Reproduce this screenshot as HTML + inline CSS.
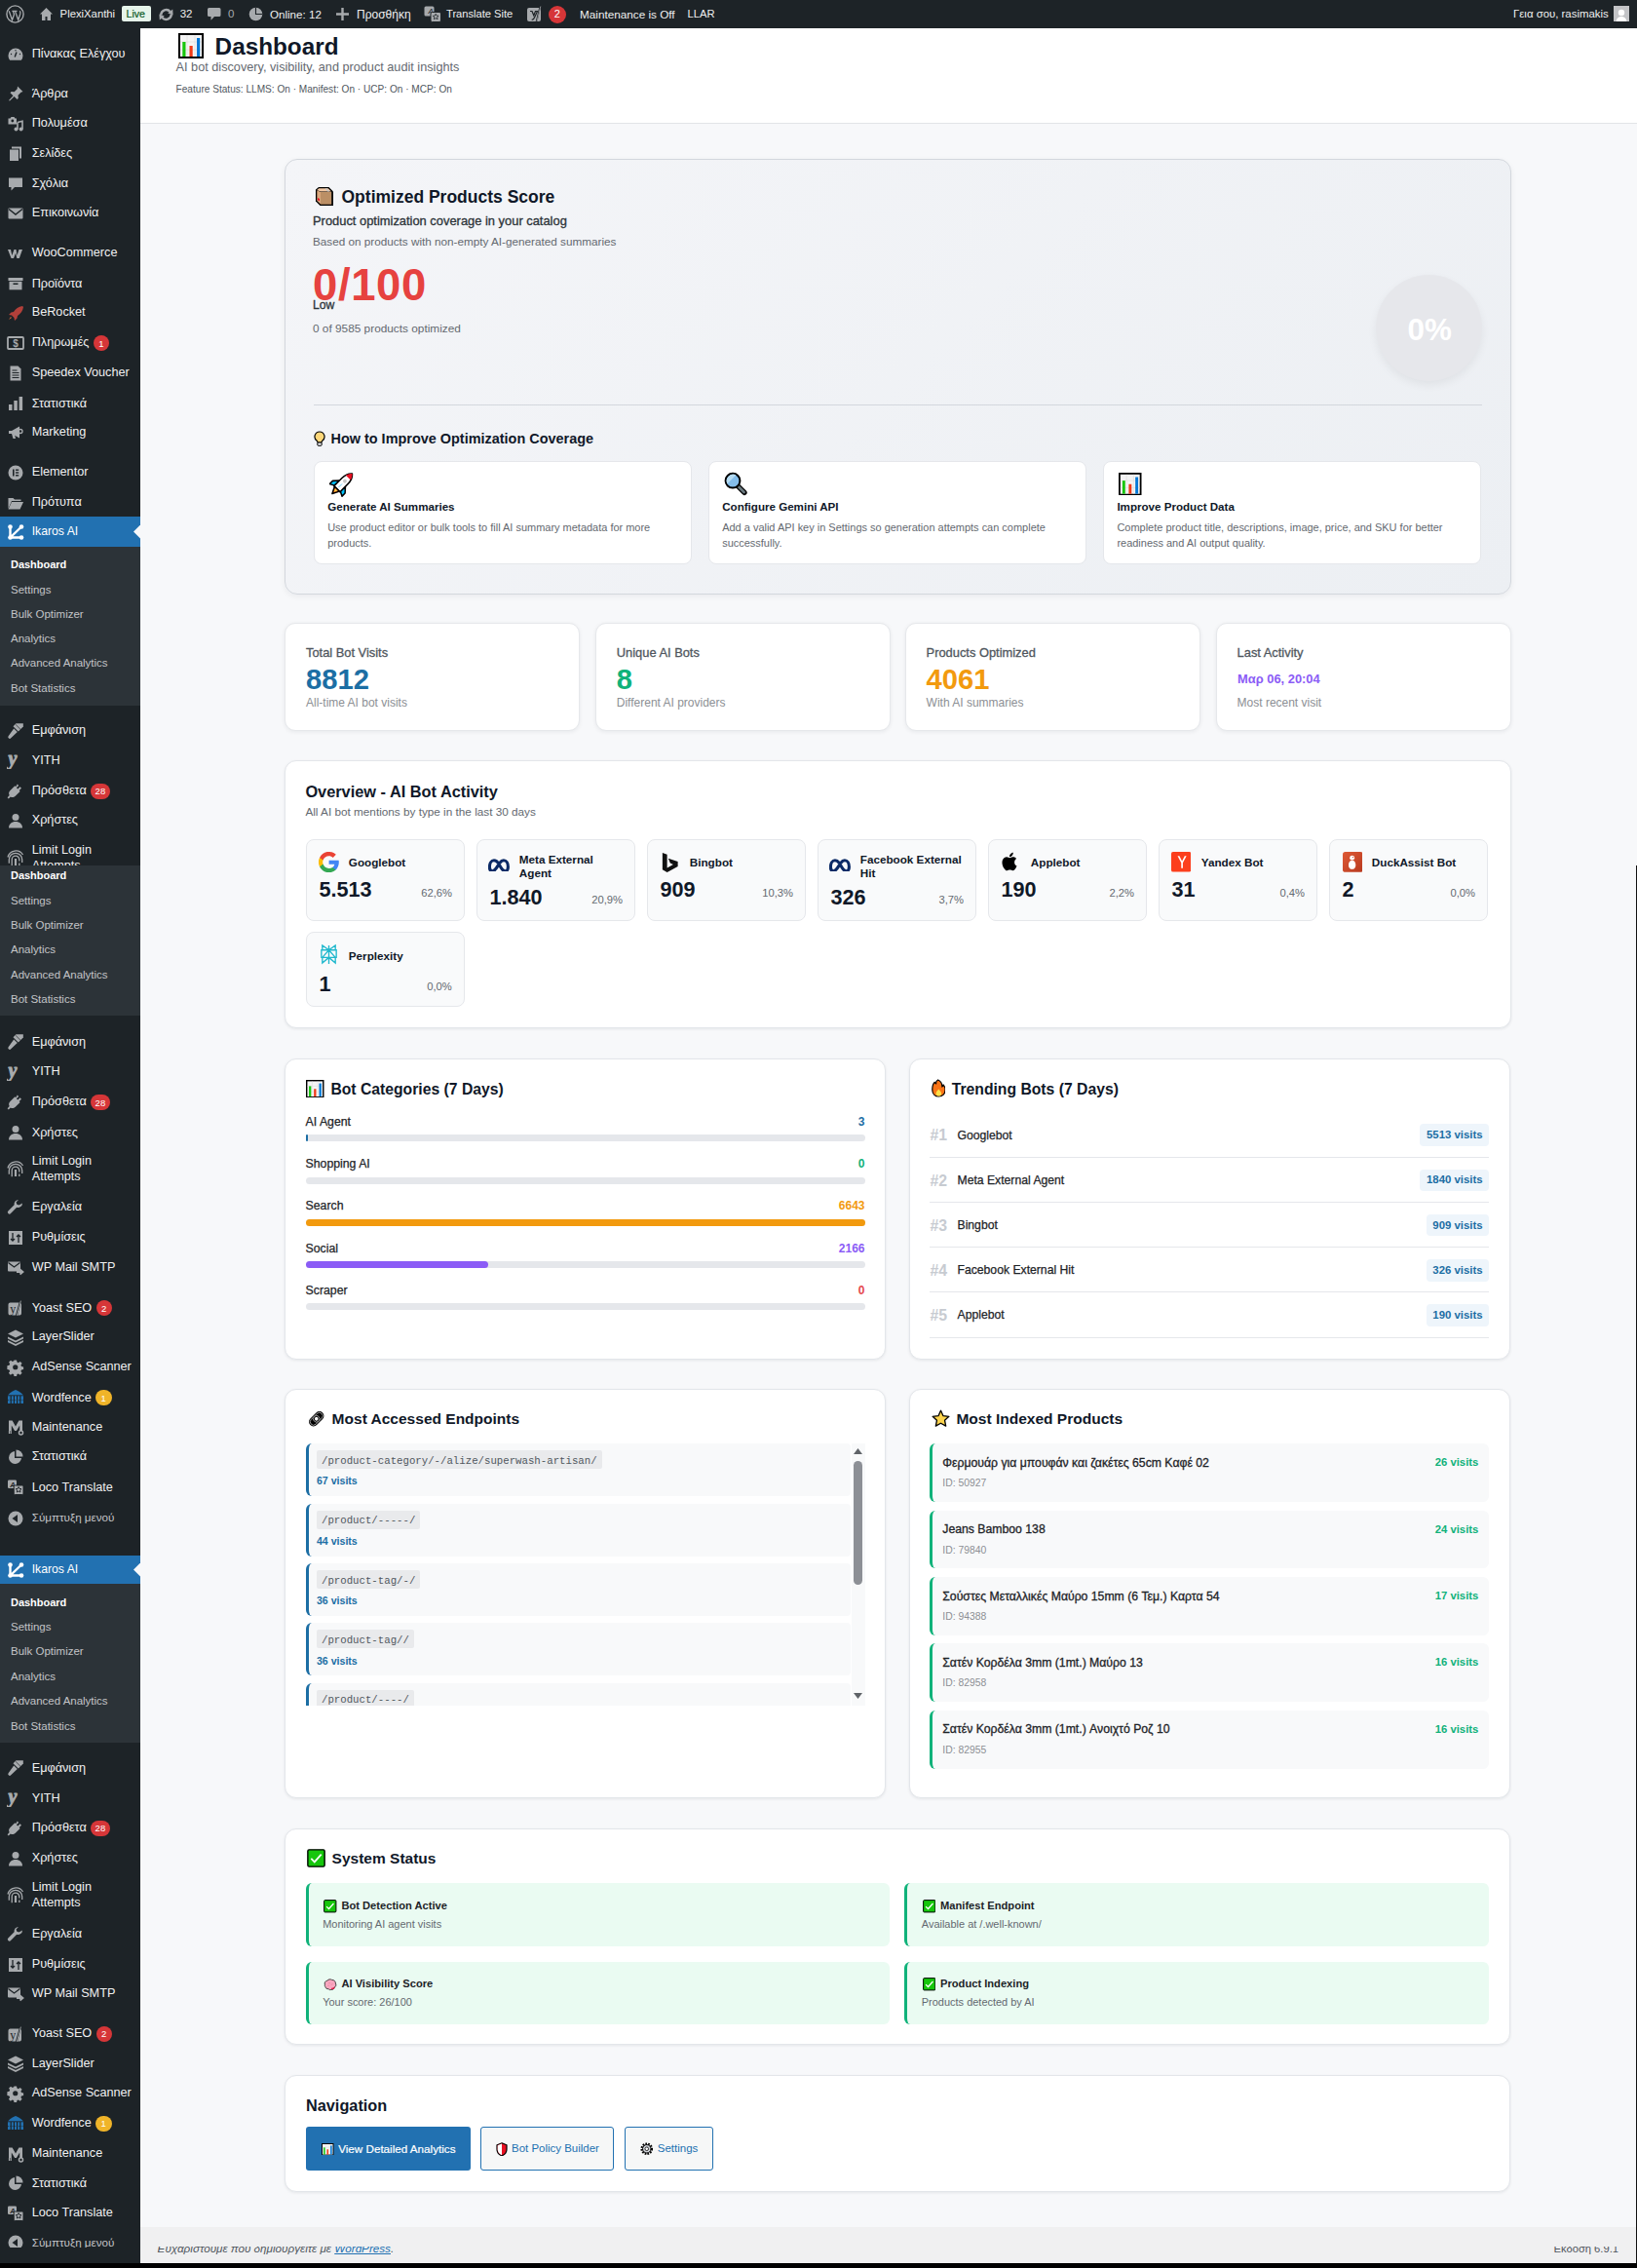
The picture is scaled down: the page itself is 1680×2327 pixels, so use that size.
<!DOCTYPE html>
<html><head><meta charset="utf-8"><title>Dashboard</title>
<style>
*{margin:0;padding:0;box-sizing:border-box}
html,body{width:1680px;height:2327px;overflow:hidden}
body{position:relative;background:#f7f8fa;font-family:"Liberation Sans",sans-serif;color:#1d2327}
.r{position:absolute;display:block}
.t{position:absolute;white-space:nowrap}
</style></head><body>
<div class="r" style="left:144.0px;top:29.0px;width:1536.0px;height:97.3px;background:#fff"></div>
<div class="r" style="left:144.0px;top:126.3px;width:1536.0px;height:1.0px;background:#e2e4e7"></div>
<div class="r" style="left:144.0px;top:2285.3px;width:1536.0px;height:36.7px;background:#f0f0f1"></div>
<div class="r" style="left:0.0px;top:2322.0px;width:1680.0px;height:5.0px;background:#000"></div>
<div class="r" style="left:1679.0px;top:888.0px;width:1.0px;height:1434.0px;background:#111"></div>
<div class="r" style="left:0.0px;top:29.0px;width:144.0px;height:2293.0px;background:#1d2327"></div>
<div class="r" style="left:0.0px;top:0.0px;width:1680.0px;height:29.0px;background:#1d2327"></div>
<svg class="r" style="left:6.0px;top:5.0px" width="19.0" height="19.0" viewBox="0 0 19 19"><circle cx="9.5" cy="9.5" r="8.6" fill="none" stroke="#a7aaad" stroke-width="1.4"/><path d="M3.2 6.2l3.3 9.3 2-5.8-1.1-3.3h-1M7.3 6.4h4.2M9.5 6.4l3.2 9.1 2-6c.4-1.3.3-2.4-.4-3.2" fill="none" stroke="#a7aaad" stroke-width="1.3"/></svg>
<svg class="r" style="left:40.0px;top:6.5px" width="15.0" height="15.0" viewBox="0 0 15 15"><path d="M7.5 1L1 7.5h2V14h3.5V10h2v4H12V7.5h2z" fill="#a7aaad"/></svg>
<div class="t" style="left:61.6px;top:8.9px;font-size:11.3px;line-height:11.3px;font-weight:400;color:#f0f0f1;">PlexiXanthi</div>
<div class="r" style="left:124.7px;top:6.2px;width:30.5px;height:15.5px;background:#e6f4ea;border-radius:2px"></div>
<div class="t" style="left:129.5px;top:9.2px;font-size:10.6px;line-height:10.6px;font-weight:400;color:#0b5a1e;-webkit-text-stroke:0.2px #0b5a1e;">Live</div>
<svg class="r" style="left:161.5px;top:6.5px" width="17.0" height="16.0" viewBox="0 0 17 16"><path d="M3.2 8.2A5.3 5.3 0 0 1 12.6 5" fill="none" stroke="#a7aaad" stroke-width="2.4"/><path d="M10.2 6.6L15.6 8.4 15.2 2.6z" fill="#a7aaad"/><path d="M13.8 7.8A5.3 5.3 0 0 1 4.4 11" fill="none" stroke="#a7aaad" stroke-width="2.4"/><path d="M6.8 9.4L1.4 7.6 1.8 13.4z" fill="#a7aaad"/></svg>
<div class="t" style="left:184.7px;top:8.8px;font-size:11.5px;line-height:11.5px;font-weight:400;color:#f0f0f1;">32</div>
<svg class="r" style="left:212.0px;top:7.0px" width="15.0" height="15.0" viewBox="0 0 15 15"><path d="M2.5 1h10.5a1.5 1.5 0 0 1 1.5 1.5v6a1.5 1.5 0 0 1-1.5 1.5H8l-3.5 3.8V10H2.5A1.5 1.5 0 0 1 1 8.5v-6A1.5 1.5 0 0 1 2.5 1z" fill="#a7aaad"/></svg>
<div class="t" style="left:234.0px;top:8.8px;font-size:11.5px;line-height:11.5px;font-weight:400;color:#a7aaad;">0</div>
<svg class="r" style="left:255.0px;top:7.0px" width="15.0" height="15.0" viewBox="0 0 15 15"><circle cx="7.5" cy="7.5" r="6.8" fill="#a7aaad"/><path d="M7.5 .7v6.8h6.8" fill="none" stroke="#1d2327" stroke-width="1.1"/></svg>
<div class="t" style="left:277.0px;top:8.7px;font-size:11.6px;line-height:11.6px;font-weight:400;color:#f0f0f1;">Online: 12</div>
<svg class="r" style="left:345.0px;top:8.0px" width="13.0" height="13.0" viewBox="0 0 13 13"><path d="M5.3 0h2.4v5.3H13v2.4H7.7V13H5.3V7.7H0V5.3h5.3z" fill="#a7aaad"/></svg>
<div class="t" style="left:366.0px;top:8.5px;font-size:12.0px;line-height:12.0px;font-weight:400;color:#f0f0f1;">Προσθήκη</div>
<svg class="r" style="left:435.0px;top:6.0px" width="18.0" height="17.0" viewBox="0 0 18 17"><rect x="0.5" y="0.5" width="10" height="10" rx="1.5" fill="#a7aaad"/><text x="4.5" y="8" font-size="8" font-style="italic" font-family="Liberation Sans" fill="#1d2327">A</text><rect x="7" y="6.5" width="10.5" height="10" rx="1.5" fill="#a7aaad" stroke="#1d2327" stroke-width="1"/><path d="M12.2 8.3l.9 1.8 2 .3-1.5 1.3.4 2-1.8-1-1.8 1 .4-2-1.5-1.3 2-.3z" fill="none" stroke="#1d2327" stroke-width="0.8"/></svg>
<div class="t" style="left:458.0px;top:9.0px;font-size:11.15px;line-height:11.15px;font-weight:400;color:#f0f0f1;">Translate Site</div>
<svg class="r" style="left:540.0px;top:5.0px" width="17.0" height="18.0" viewBox="0 0 17 18"><path d="M3 3h10a2 2 0 0 1 2 2v10a2 2 0 0 1-2 2H3a2 2 0 0 1-2-2V5a2 2 0 0 1 2-2z" fill="#a7aaad"/><path d="M4 6.5h2l1.8 4.3 1.7-4.3h2L8.5 13c-.6 1.5-1.4 2.2-2.8 2.4" fill="none" stroke="#1d2327" stroke-width="1.2"/><path d="M10.5 17.5L14.5 1" stroke="#1d2327" stroke-width="1.6"/><path d="M11 17L14.8 1.5" stroke="#a7aaad" stroke-width="0.8"/></svg>
<div class="r" style="left:563.0px;top:5.5px;width:18.0px;height:18.0px;background:#d63638;border-radius:50%"></div>
<div class="t" style="left:568.8px;top:9.2px;font-size:11px;line-height:11px;font-weight:400;color:#fff;">2</div>
<div class="t" style="left:595.0px;top:8.7px;font-size:11.74px;line-height:11.74px;font-weight:400;color:#f0f0f1;">Maintenance is Off</div>
<div class="t" style="left:705.5px;top:8.9px;font-size:11.2px;line-height:11.2px;font-weight:400;color:#f0f0f1;">LLAR</div>
<div class="t" style="left:1553.0px;top:8.8px;font-size:11.4px;line-height:11.4px;font-weight:400;color:#f0f0f1;">Γεια σου, rasimakis</div>
<div class="r" style="left:1655.8px;top:6.0px;width:16.2px;height:16.0px;background:#c3c4c7"></div>
<svg class="r" style="left:1656.0px;top:6.5px" width="16.0" height="15.5" viewBox="0 0 16 15.5"><circle cx="8" cy="6" r="3.2" fill="#fff"/><path d="M2.5 15.5c.3-3.5 2.6-5.5 5.5-5.5s5.2 2 5.5 5.5z" fill="#fff"/></svg>
<svg class="r" style="left:183.0px;top:34.0px" width="26.0" height="26.0" viewBox="0 0 26 26"><g transform="scale(1.0)"><rect x="1" y="1" width="24" height="24" fill="#f4f4f4" stroke="#000" stroke-width="2"/><path d="M9 2v22M17 2v22M2 9h22M2 17h22" stroke="#ddd" stroke-width="0.7"/><rect x="4.3" y="9" width="3.2" height="15" fill="#16c60c"/><rect x="11.5" y="13" width="3.2" height="11" fill="#f03a17"/><rect x="19" y="5" width="3.2" height="19" fill="#0078d7"/></g></svg>
<div class="t" style="left:220.6px;top:35.8px;font-size:24.3px;line-height:24.3px;font-weight:700;color:#101828;">Dashboard</div>
<div class="t" style="left:180.6px;top:62.8px;font-size:12.7px;line-height:12.7px;font-weight:400;color:#646970;">AI bot discovery, visibility, and product audit insights</div>
<div class="t" style="left:180.6px;top:86.9px;font-size:10.1px;line-height:10.1px;font-weight:400;color:#50575e;">Feature Status: LLMS: On · Manifest: On · UCP: On · MCP: On</div>
<div class="r" style="left:144px;top:2305.2px;width:1536px;height:16.8px;overflow:hidden">
<div style="position:absolute;left:0;top:-2305.2px;width:1536px;height:2327px">
<div class="t" style="left:17.6px;top:2301.3px;font-size:11.68px;line-height:11.68px;font-weight:400;color:#50575e;font-style:italic;">Ευχαριστούμε που δημιουργείτε με <span style="color:#2271b1;text-decoration:underline">WordPress</span>.</div>
<div class="t" style="right:19.0px;top:2301.5px;font-size:11.2px;line-height:11.2px;font-weight:400;color:#50575e;">Έκδοση 6.9.1</div>
</div></div>
<div class="t" style="left:32.7px;top:49.3px;font-size:12.68px;line-height:12.68px;font-weight:400;color:#f0f0f1;">Πίνακας Ελέγχου</div>
<svg class="r" style="left:7.0px;top:47.0px" width="18.0" height="18.0" viewBox="0 0 18 18"><path d="M9 2.5a7.5 7.5 0 0 0-7.5 7.5c0 1.8.6 3.4 1.7 4.7h11.6a7.4 7.4 0 0 0 1.7-4.7A7.5 7.5 0 0 0 9 2.5z" fill="#a7aaad"/><path d="M8.2 11.5l1.8-5" stroke="#1d2327" stroke-width="1.4"/><circle cx="4.5" cy="8.5" r=".7" fill="#1d2327"/><circle cx="13.5" cy="8.5" r=".7" fill="#1d2327"/><circle cx="9" cy="4.8" r=".7" fill="#1d2327"/></svg>
<div class="t" style="left:32.7px;top:89.6px;font-size:12.68px;line-height:12.68px;font-weight:400;color:#f0f0f1;">Άρθρα</div>
<svg class="r" style="left:7.0px;top:87.3px" width="18.0" height="18.0" viewBox="0 0 18 18"><path d="M11 1.5l5.5 5.5-2 .8-3 3 .3 3-1.2 1.2-3-3L3 16.5 2 16l4.5-4.7-3-3L4.7 7l3 .3 3-3z" fill="#a7aaad"/></svg>
<div class="t" style="left:32.7px;top:120.4px;font-size:12.68px;line-height:12.68px;font-weight:400;color:#f0f0f1;">Πολυμέσα</div>
<svg class="r" style="left:7.0px;top:118.1px" width="18.0" height="18.0" viewBox="0 0 18 18"><path d="M1.5 3.5h2l1-1.5h3l1 1.5h1.5v6h-8.5z" fill="#a7aaad"/><circle cx="5.8" cy="6" r="1.4" fill="#1d2327"/><path d="M11 7.5l5-1.3v8.3" fill="none" stroke="#a7aaad" stroke-width="1.6"/><path d="M11 7.5v7" stroke="#a7aaad" stroke-width="1.6"/><circle cx="9.5" cy="14.5" r="2" fill="#a7aaad"/><circle cx="14.6" cy="14.5" r="2" fill="#a7aaad"/></svg>
<div class="t" style="left:32.7px;top:151.1px;font-size:12.68px;line-height:12.68px;font-weight:400;color:#f0f0f1;">Σελίδες</div>
<svg class="r" style="left:7.0px;top:148.8px" width="18.0" height="18.0" viewBox="0 0 18 18"><rect x="5" y="1.5" width="10" height="12" fill="#a7aaad"/><rect x="2.5" y="4" width="10" height="12.5" fill="#a7aaad" stroke="#1d2327" stroke-width="1"/></svg>
<div class="t" style="left:32.7px;top:182.3px;font-size:12.68px;line-height:12.68px;font-weight:400;color:#f0f0f1;">Σχόλια</div>
<svg class="r" style="left:7.0px;top:180.0px" width="18.0" height="18.0" viewBox="0 0 18 18"><path d="M2 2.5h14v9.5H8l-3.5 3.5V12H2z" fill="#a7aaad"/></svg>
<div class="t" style="left:32.7px;top:212.1px;font-size:12.68px;line-height:12.68px;font-weight:400;color:#f0f0f1;">Επικοινωνία</div>
<svg class="r" style="left:7.0px;top:209.8px" width="18.0" height="18.0" viewBox="0 0 18 18"><rect x="1.5" y="3.5" width="15" height="11" rx="1" fill="#a7aaad"/><path d="M2 4.5l7 5.5 7-5.5" fill="none" stroke="#1d2327" stroke-width="1.5"/></svg>
<div class="t" style="left:32.7px;top:253.1px;font-size:12.68px;line-height:12.68px;font-weight:400;color:#f0f0f1;">WooCommerce</div>
<svg class="r" style="left:7.0px;top:250.8px" width="18.0" height="18.0" viewBox="0 0 18 18"><path d="M1 5h3l1.3 6 2.2-6h2l1 6 2-6H16l-3.2 9h-2.5l-1.2-5.2L7 14H4.5z" fill="#a7aaad"/></svg>
<div class="t" style="left:32.7px;top:284.5px;font-size:12.68px;line-height:12.68px;font-weight:400;color:#f0f0f1;">Προϊόντα</div>
<svg class="r" style="left:7.0px;top:282.2px" width="18.0" height="18.0" viewBox="0 0 18 18"><rect x="1.5" y="3" width="15" height="3" fill="#a7aaad"/><rect x="2.5" y="6.8" width="13" height="8.5" fill="#a7aaad"/><rect x="6.5" y="8.5" width="5" height="1.5" fill="#1d2327"/></svg>
<div class="t" style="left:32.7px;top:314.2px;font-size:12.68px;line-height:12.68px;font-weight:400;color:#f0f0f1;">BeRocket</div>
<svg class="r" style="left:7.0px;top:311.9px" width="18.0" height="18.0" viewBox="0 0 18 18"><path d="M16 2c-4 .5-7 3-9 6l-2.5.5L2 11l3 .5L7.5 14l.5 3 2.5-2.5.5-2.5c3-2 5.5-5 6-9z" fill="#b3403a"/><path d="M4 13l-2 3 3-2z" fill="#d2693a"/></svg>
<div class="t" style="left:32.7px;top:345.4px;font-size:12.68px;line-height:12.68px;font-weight:400;color:#f0f0f1;">Πληρωμές</div>
<svg class="r" style="left:7.0px;top:343.1px" width="18.0" height="18.0" viewBox="0 0 18 18"><rect x="1" y="3" width="16" height="12" rx="1" fill="none" stroke="#a7aaad" stroke-width="1.8"/><text x="9" y="13" font-size="10" font-weight="700" text-anchor="middle" fill="#a7aaad" font-family="Liberation Sans">$</text></svg>
<div class="r" style="left:95.9px;top:344.1px;width:16.5px;height:16.0px;background:#d63638;border-radius:8px"></div>
<div class="t" style="left:101.2px;top:347.5px;font-size:9.5px;line-height:9.5px;font-weight:400;color:#fff;">1</div>
<div class="t" style="left:32.7px;top:375.8px;font-size:12.68px;line-height:12.68px;font-weight:400;color:#f0f0f1;">Speedex Voucher</div>
<svg class="r" style="left:7.0px;top:373.5px" width="18.0" height="18.0" viewBox="0 0 18 18"><path d="M3.5 1.5h8l3 3v12h-11z" fill="#a7aaad"/><path d="M5.5 6h5M5.5 8.5h7M5.5 11h7M5.5 13.5h7" stroke="#1d2327" stroke-width="1"/></svg>
<div class="t" style="left:32.7px;top:407.5px;font-size:12.68px;line-height:12.68px;font-weight:400;color:#f0f0f1;">Στατιστικά</div>
<svg class="r" style="left:7.0px;top:405.2px" width="18.0" height="18.0" viewBox="0 0 18 18"><rect x="2" y="10" width="3.5" height="6" fill="#a7aaad"/><rect x="7.3" y="6" width="3.5" height="10" fill="#a7aaad"/><rect x="12.6" y="2" width="3.5" height="14" fill="#a7aaad"/></svg>
<div class="t" style="left:32.7px;top:437.3px;font-size:12.68px;line-height:12.68px;font-weight:400;color:#f0f0f1;">Marketing</div>
<svg class="r" style="left:7.0px;top:435.0px" width="18.0" height="18.0" viewBox="0 0 18 18"><path d="M2 7h3l8-4.5v12L5 10H2z" fill="#a7aaad"/><path d="M5 10l1.5 5h2.5L8 10.5" fill="#a7aaad"/><circle cx="14" cy="7.5" r="2" fill="none" stroke="#a7aaad" stroke-width="1.3"/></svg>
<div class="t" style="left:32.7px;top:478.3px;font-size:12.68px;line-height:12.68px;font-weight:400;color:#f0f0f1;">Elementor</div>
<svg class="r" style="left:7.0px;top:476.0px" width="18.0" height="18.0" viewBox="0 0 18 18"><circle cx="9" cy="9" r="7.5" fill="#a7aaad"/><rect x="6" y="5.5" width="1.6" height="7" fill="#1d2327"/><rect x="9" y="5.5" width="3.2" height="1.4" fill="#1d2327"/><rect x="9" y="8.3" width="3.2" height="1.4" fill="#1d2327"/><rect x="9" y="11.1" width="3.2" height="1.4" fill="#1d2327"/></svg>
<div class="t" style="left:32.7px;top:509.4px;font-size:12.68px;line-height:12.68px;font-weight:400;color:#f0f0f1;">Πρότυπα</div>
<svg class="r" style="left:7.0px;top:507.1px" width="18.0" height="18.0" viewBox="0 0 18 18"><path d="M1.5 4h5l1.5 1.5h6.5V7H5l-3.5 8z" fill="#a7aaad"/><path d="M5 8h12l-3.5 7.5H1.5z" fill="#a7aaad"/></svg>
<div class="r" style="left:0.0px;top:530.0px;width:144.0px;height:30.7px;background:#2271b1"></div>
<div class="t" style="left:32.7px;top:539.4px;font-size:12.23px;line-height:12.23px;font-weight:400;color:#fff;">Ikaros AI</div>
<svg class="r" style="left:7.0px;top:536.9px" width="18.0" height="18.0" viewBox="0 0 18 18"><circle cx="3.5" cy="3.5" r="2.3" fill="#fff"/><circle cx="15" cy="3.5" r="2.3" fill="#fff"/><circle cx="3.5" cy="14.5" r="2.3" fill="#fff"/><circle cx="15" cy="14.5" r="2.3" fill="#fff"/><path d="M3.5 3.5v11h11.5M3.5 14.5L15 3.5" stroke="#fff" stroke-width="2.4" fill="none"/></svg>
<svg class="r" style="left:136.5px;top:537.9px" width="7.5" height="15.0" viewBox="0 0 7.5 15"><path d="M7.5 0v15L0 7.5z" fill="#f7f8fa"/></svg>
<div class="r" style="left:0.0px;top:560.7px;width:144.0px;height:162.9px;background:#2c3338"></div>
<div class="t" style="left:11.0px;top:574.4px;font-size:10.98px;line-height:10.98px;font-weight:700;color:#fff;">Dashboard</div>
<div class="t" style="left:11.0px;top:599.5px;font-size:11.49px;line-height:11.49px;font-weight:400;color:#c3c4c7;">Settings</div>
<div class="t" style="left:11.0px;top:624.8px;font-size:11.49px;line-height:11.49px;font-weight:400;color:#c3c4c7;">Bulk Optimizer</div>
<div class="t" style="left:11.0px;top:650.1px;font-size:11.49px;line-height:11.49px;font-weight:400;color:#c3c4c7;">Analytics</div>
<div class="t" style="left:11.0px;top:675.4px;font-size:11.49px;line-height:11.49px;font-weight:400;color:#c3c4c7;">Advanced Analytics</div>
<div class="t" style="left:11.0px;top:700.7px;font-size:11.49px;line-height:11.49px;font-weight:400;color:#c3c4c7;">Bot Statistics</div>
<div class="t" style="left:32.7px;top:743.3px;font-size:12.68px;line-height:12.68px;font-weight:400;color:#f0f0f1;">Εμφάνιση</div>
<svg class="r" style="left:7.0px;top:741.0px" width="18.0" height="18.0" viewBox="0 0 18 18"><path d="M9.5 1.2h7.3v3.3l-5 5-5.3-5.3z" fill="#a7aaad"/><path d="M9.2 2.5l5.8 5.8" stroke="#1d2327" stroke-width="0.7"/><path d="M7.2 6.5l3.6 3.6-6.6 6.2a1.6 1.6 0 0 1-2.4-2.4z" fill="#a7aaad"/></svg>
<div class="t" style="left:32.7px;top:773.6px;font-size:12.68px;line-height:12.68px;font-weight:400;color:#f0f0f1;">YITH</div>
<svg class="r" style="left:7.0px;top:771.3px" width="18.0" height="18.0" viewBox="0 0 18 18"><text x="1.5" y="14" font-size="20" font-weight="700" font-style="italic" font-family="Liberation Serif" fill="#a7aaad" stroke="#a7aaad" stroke-width="1">y</text></svg>
<div class="t" style="left:32.7px;top:805.3px;font-size:12.68px;line-height:12.68px;font-weight:400;color:#f0f0f1;">Πρόσθετα</div>
<svg class="r" style="left:7.0px;top:803.0px" width="18.0" height="18.0" viewBox="0 0 18 18"><path d="M10.8 1.5l1.4 1.4-2.3 2.3 1.4 1.4 2.3-2.3 1.4 1.4-2.3 2.3.9.9-4.8 4.8c-1.6 1.6-3.6 1.8-5 .8L1.8 16.4.6 15.2l2.1-2.1c-1-1.4-.8-3.4.8-5l4.8-4.8.9.9z" fill="#a7aaad"/></svg>
<div class="r" style="left:93.3px;top:804.0px;width:20.0px;height:16.0px;background:#d63638;border-radius:8px"></div>
<div class="t" style="left:97.6px;top:807.4px;font-size:9.5px;line-height:9.5px;font-weight:400;color:#fff;">28</div>
<div class="t" style="left:32.7px;top:835.0px;font-size:12.68px;line-height:12.68px;font-weight:400;color:#f0f0f1;">Χρήστες</div>
<svg class="r" style="left:7.0px;top:832.7px" width="18.0" height="18.0" viewBox="0 0 18 18"><circle cx="9" cy="5.5" r="3.5" fill="#a7aaad"/><path d="M2 16.5c0-4 3-6.5 7-6.5s7 2.5 7 6.5z" fill="#a7aaad"/></svg>
<div class="t" style="left:32.7px;top:865.7px;font-size:12.68px;line-height:12.68px;font-weight:400;color:#f0f0f1;">Limit Login</div>
<div class="t" style="left:32.7px;top:882.2px;font-size:12.68px;line-height:12.68px;font-weight:400;color:#f0f0f1;">Attempts</div>
<svg class="r" style="left:7.0px;top:871.6px" width="18.0" height="18.0" viewBox="0 0 18 18"><path d="M5.2 16.2V10a3.8 3.8 0 0 1 7.6 0v1.5M2.3 13.8V10a6.7 6.7 0 0 1 13.4 0v3M1 7.5A8.5 8.5 0 0 1 16.5 5" fill="none" stroke="#a7aaad" stroke-width="1.3"/><path d="M9 9v7" stroke="#a7aaad" stroke-width="2.2"/><path d="M12.8 13.5v2.5" stroke="#a7aaad" stroke-width="1.3"/></svg>
<div class="r" style="left:0.0px;top:887.7px;width:144.0px;height:154.6px;background:#2c3338"></div>
<div class="t" style="left:11.0px;top:893.4px;font-size:10.98px;line-height:10.98px;font-weight:700;color:#fff;">Dashboard</div>
<div class="t" style="left:11.0px;top:918.6px;font-size:11.49px;line-height:11.49px;font-weight:400;color:#c3c4c7;">Settings</div>
<div class="t" style="left:11.0px;top:944.0px;font-size:11.49px;line-height:11.49px;font-weight:400;color:#c3c4c7;">Bulk Optimizer</div>
<div class="t" style="left:11.0px;top:969.4px;font-size:11.49px;line-height:11.49px;font-weight:400;color:#c3c4c7;">Analytics</div>
<div class="t" style="left:11.0px;top:994.9px;font-size:11.49px;line-height:11.49px;font-weight:400;color:#c3c4c7;">Advanced Analytics</div>
<div class="t" style="left:11.0px;top:1020.3px;font-size:11.49px;line-height:11.49px;font-weight:400;color:#c3c4c7;">Bot Statistics</div>
<div class="t" style="left:32.7px;top:1062.7px;font-size:12.68px;line-height:12.68px;font-weight:400;color:#f0f0f1;">Εμφάνιση</div>
<svg class="r" style="left:7.0px;top:1060.4px" width="18.0" height="18.0" viewBox="0 0 18 18"><path d="M9.5 1.2h7.3v3.3l-5 5-5.3-5.3z" fill="#a7aaad"/><path d="M9.2 2.5l5.8 5.8" stroke="#1d2327" stroke-width="0.7"/><path d="M7.2 6.5l3.6 3.6-6.6 6.2a1.6 1.6 0 0 1-2.4-2.4z" fill="#a7aaad"/></svg>
<div class="t" style="left:32.7px;top:1093.4px;font-size:12.68px;line-height:12.68px;font-weight:400;color:#f0f0f1;">YITH</div>
<svg class="r" style="left:7.0px;top:1091.1px" width="18.0" height="18.0" viewBox="0 0 18 18"><text x="1.5" y="14" font-size="20" font-weight="700" font-style="italic" font-family="Liberation Serif" fill="#a7aaad" stroke="#a7aaad" stroke-width="1">y</text></svg>
<div class="t" style="left:32.7px;top:1124.4px;font-size:12.68px;line-height:12.68px;font-weight:400;color:#f0f0f1;">Πρόσθετα</div>
<svg class="r" style="left:7.0px;top:1122.1px" width="18.0" height="18.0" viewBox="0 0 18 18"><path d="M10.8 1.5l1.4 1.4-2.3 2.3 1.4 1.4 2.3-2.3 1.4 1.4-2.3 2.3.9.9-4.8 4.8c-1.6 1.6-3.6 1.8-5 .8L1.8 16.4.6 15.2l2.1-2.1c-1-1.4-.8-3.4.8-5l4.8-4.8.9.9z" fill="#a7aaad"/></svg>
<div class="r" style="left:93.3px;top:1123.1px;width:20.0px;height:16.0px;background:#d63638;border-radius:8px"></div>
<div class="t" style="left:97.6px;top:1126.5px;font-size:9.5px;line-height:9.5px;font-weight:400;color:#fff;">28</div>
<div class="t" style="left:32.7px;top:1155.5px;font-size:12.68px;line-height:12.68px;font-weight:400;color:#f0f0f1;">Χρήστες</div>
<svg class="r" style="left:7.0px;top:1153.2px" width="18.0" height="18.0" viewBox="0 0 18 18"><circle cx="9" cy="5.5" r="3.5" fill="#a7aaad"/><path d="M2 16.5c0-4 3-6.5 7-6.5s7 2.5 7 6.5z" fill="#a7aaad"/></svg>
<div class="t" style="left:32.7px;top:1184.5px;font-size:12.68px;line-height:12.68px;font-weight:400;color:#f0f0f1;">Limit Login</div>
<div class="t" style="left:32.7px;top:1201.0px;font-size:12.68px;line-height:12.68px;font-weight:400;color:#f0f0f1;">Attempts</div>
<svg class="r" style="left:7.0px;top:1190.5px" width="18.0" height="18.0" viewBox="0 0 18 18"><path d="M5.2 16.2V10a3.8 3.8 0 0 1 7.6 0v1.5M2.3 13.8V10a6.7 6.7 0 0 1 13.4 0v3M1 7.5A8.5 8.5 0 0 1 16.5 5" fill="none" stroke="#a7aaad" stroke-width="1.3"/><path d="M9 9v7" stroke="#a7aaad" stroke-width="2.2"/><path d="M12.8 13.5v2.5" stroke="#a7aaad" stroke-width="1.3"/></svg>
<div class="t" style="left:32.7px;top:1232.1px;font-size:12.68px;line-height:12.68px;font-weight:400;color:#f0f0f1;">Εργαλεία</div>
<svg class="r" style="left:7.0px;top:1229.8px" width="18.0" height="18.0" viewBox="0 0 18 18"><path d="M16 4.5a4.5 4.5 0 0 1-5.8 4.3L4 15a1.8 1.8 0 0 1-2.6-2.6l6.2-6.2A4.5 4.5 0 0 1 12 1l-2.5 2.5.8 2.2 2.2.8z" fill="#a7aaad"/></svg>
<div class="t" style="left:32.7px;top:1263.1px;font-size:12.68px;line-height:12.68px;font-weight:400;color:#f0f0f1;">Ρυθμίσεις</div>
<svg class="r" style="left:7.0px;top:1260.8px" width="18.0" height="18.0" viewBox="0 0 18 18"><rect x="2" y="2" width="14" height="14" fill="#a7aaad"/><path d="M6 4v8M4 10l2 2 2-2M12 14V6M10 8l2-2 2 2" stroke="#1d2327" stroke-width="1.3" fill="none"/></svg>
<div class="t" style="left:32.7px;top:1293.8px;font-size:12.68px;line-height:12.68px;font-weight:400;color:#f0f0f1;">WP Mail SMTP</div>
<svg class="r" style="left:7.0px;top:1291.5px" width="18.0" height="18.0" viewBox="0 0 18 18"><rect x="1" y="2.5" width="13" height="10" rx="1" fill="#a7aaad"/><path d="M1.5 3.5l6 4.5 6-4.5" fill="none" stroke="#1d2327" stroke-width="1.3"/><path d="M10 13h5.5M13.5 10.5L16.5 13l-3 2.5" stroke="#a7aaad" stroke-width="1.8" fill="none"/></svg>
<div class="t" style="left:32.7px;top:1335.5px;font-size:12.68px;line-height:12.68px;font-weight:400;color:#f0f0f1;">Yoast SEO</div>
<svg class="r" style="left:7.0px;top:1333.2px" width="18.0" height="18.0" viewBox="0 0 18 18"><path d="M3.5 3.5h9.5a2 2 0 0 1 2 2v9a2 2 0 0 1-2 2H3.5a2 2 0 0 1-2-2v-9a2 2 0 0 1 2-2z" fill="#a7aaad"/><text x="3.2" y="13.5" font-size="12" font-family="Liberation Serif" fill="#1d2327">y</text><path d="M9.8 17.2L14.2 1.2" stroke="#1d2327" stroke-width="2"/><path d="M10.3 16.8L14.4 1.6" stroke="#a7aaad" stroke-width="0.9"/></svg>
<div class="r" style="left:98.8px;top:1334.2px;width:16.5px;height:16.0px;background:#d63638;border-radius:8px"></div>
<div class="t" style="left:104.1px;top:1337.6px;font-size:9.5px;line-height:9.5px;font-weight:400;color:#fff;">2</div>
<div class="t" style="left:32.7px;top:1365.2px;font-size:12.68px;line-height:12.68px;font-weight:400;color:#f0f0f1;">LayerSlider</div>
<svg class="r" style="left:7.0px;top:1362.9px" width="18.0" height="18.0" viewBox="0 0 18 18"><path d="M9 1.5l8 4-8 4-8-4z" fill="#a7aaad"/><path d="M1 8.5l8 4 8-4v2l-8 4-8-4zM1 12l8 4 8-4v2l-8 4-8-4z" fill="#a7aaad"/></svg>
<div class="t" style="left:32.7px;top:1396.2px;font-size:12.68px;line-height:12.68px;font-weight:400;color:#f0f0f1;">AdSense Scanner</div>
<svg class="r" style="left:7.0px;top:1393.9px" width="18.0" height="18.0" viewBox="0 0 18 18"><path d="M7.6 1.5h2.8l.4 2.2 1.5.7 1.9-1.3 2 2-1.3 1.9.7 1.5 2.2.4v2.8l-2.2.4-.7 1.5 1.3 1.9-2 2-1.9-1.3-1.5.7-.4 2.2H7.6l-.4-2.2-1.5-.7-1.9 1.3-2-2 1.3-1.9-.7-1.5-2.2-.4V7.6l2.2-.4.7-1.5L2 3.8l2-2 1.9 1.3 1.5-.7z" fill="#a7aaad" transform="translate(0.2 0) scale(0.95)"/><circle cx="8.75" cy="8.75" r="2.6" fill="#1d2327"/></svg>
<div class="t" style="left:32.7px;top:1427.7px;font-size:12.68px;line-height:12.68px;font-weight:400;color:#f0f0f1;">Wordfence</div>
<svg class="r" style="left:7.0px;top:1425.4px" width="18.0" height="18.0" viewBox="0 0 18 18"><path d="M1 6.5C4 3 7 2 9 1c2 1 5 2 8 5.5V15H1z" fill="#2271b1"/><path d="M1 6.8h16" stroke="#1d2327" stroke-width="0.9"/><path d="M4.2 7v8.5M7.4 7v8.5M10.6 7v8.5M13.8 7v8.5" stroke="#1d2327" stroke-width="1.2"/><path d="M1 11.5h16" stroke="#1d2327" stroke-width="0.6" stroke-dasharray="1.2 1"/></svg>
<div class="r" style="left:98.3px;top:1426.4px;width:16.5px;height:16.0px;background:#f0b429;border-radius:8px"></div>
<div class="t" style="left:103.6px;top:1429.8px;font-size:9.5px;line-height:9.5px;font-weight:400;color:#fff;">1</div>
<div class="t" style="left:32.7px;top:1457.6px;font-size:12.68px;line-height:12.68px;font-weight:400;color:#f0f0f1;">Maintenance</div>
<svg class="r" style="left:7.0px;top:1455.3px" width="18.0" height="18.0" viewBox="0 0 18 18"><path d="M2 2.5h3.6L9 8.5l3.4-6H16v10.5h-2.8V7.5L9.9 13H8.1L4.8 7.5V13H2z" fill="#a7aaad"/><circle cx="14.5" cy="15" r="2" fill="none" stroke="#a7aaad" stroke-width="1.5"/><path d="M2.5 13v3M4.2 13v3" stroke="#a7aaad" stroke-width="1.2"/></svg>
<div class="t" style="left:32.7px;top:1488.4px;font-size:12.68px;line-height:12.68px;font-weight:400;color:#f0f0f1;">Στατιστικά</div>
<svg class="r" style="left:7.0px;top:1486.1px" width="18.0" height="18.0" viewBox="0 0 18 18"><path d="M8 3a6.5 6.5 0 1 0 7 7H8z" fill="#a7aaad"/><path d="M9.5 1.5v7h7a7 7 0 0 0-7-7z" fill="#a7aaad"/></svg>
<div class="t" style="left:32.7px;top:1519.5px;font-size:12.68px;line-height:12.68px;font-weight:400;color:#f0f0f1;">Loco Translate</div>
<svg class="r" style="left:7.0px;top:1517.2px" width="18.0" height="18.0" viewBox="0 0 18 18"><rect x="1" y="1.5" width="9" height="8.5" rx="1.2" fill="#a7aaad"/><text x="3.2" y="8.5" font-size="7.5" font-style="italic" font-weight="700" font-family="Liberation Sans" fill="#1d2327">A</text><rect x="7.2" y="7" width="9.8" height="9.5" rx="1.2" fill="#a7aaad" stroke="#1d2327" stroke-width="1"/><path d="M12.1 8.6l.9 1.8 2 .3-1.5 1.3.4 2-1.8-1-1.8 1 .4-2-1.5-1.3 2-.3z" fill="none" stroke="#1d2327" stroke-width="0.9"/></svg>
<div class="t" style="left:32.7px;top:1551.4px;font-size:11.65px;line-height:11.65px;font-weight:400;color:#c3c4c7;">Σύμπτυξη μενού</div>
<svg class="r" style="left:7.0px;top:1548.6px" width="18.0" height="18.0" viewBox="0 0 18 18"><circle cx="9" cy="9" r="7.5" fill="#a7aaad"/><path d="M11 5v8L5.5 9z" fill="#1d2327"/></svg>
<div class="r" style="left:0.0px;top:1595.8px;width:144.0px;height:29.2px;background:#2271b1"></div>
<div class="t" style="left:32.7px;top:1604.4px;font-size:12.23px;line-height:12.23px;font-weight:400;color:#fff;">Ikaros AI</div>
<svg class="r" style="left:7.0px;top:1601.9px" width="18.0" height="18.0" viewBox="0 0 18 18"><circle cx="3.5" cy="3.5" r="2.3" fill="#fff"/><circle cx="15" cy="3.5" r="2.3" fill="#fff"/><circle cx="3.5" cy="14.5" r="2.3" fill="#fff"/><circle cx="15" cy="14.5" r="2.3" fill="#fff"/><path d="M3.5 3.5v11h11.5M3.5 14.5L15 3.5" stroke="#fff" stroke-width="2.4" fill="none"/></svg>
<svg class="r" style="left:136.5px;top:1602.9px" width="7.5" height="15.0" viewBox="0 0 7.5 15"><path d="M7.5 0v15L0 7.5z" fill="#f7f8fa"/></svg>
<div class="r" style="left:0.0px;top:1625.0px;width:144.0px;height:163.0px;background:#2c3338"></div>
<div class="t" style="left:11.0px;top:1638.8px;font-size:10.98px;line-height:10.98px;font-weight:700;color:#fff;">Dashboard</div>
<div class="t" style="left:11.0px;top:1664.0px;font-size:11.49px;line-height:11.49px;font-weight:400;color:#c3c4c7;">Settings</div>
<div class="t" style="left:11.0px;top:1689.4px;font-size:11.49px;line-height:11.49px;font-weight:400;color:#c3c4c7;">Bulk Optimizer</div>
<div class="t" style="left:11.0px;top:1714.8px;font-size:11.49px;line-height:11.49px;font-weight:400;color:#c3c4c7;">Analytics</div>
<div class="t" style="left:11.0px;top:1740.2px;font-size:11.49px;line-height:11.49px;font-weight:400;color:#c3c4c7;">Advanced Analytics</div>
<div class="t" style="left:11.0px;top:1765.6px;font-size:11.49px;line-height:11.49px;font-weight:400;color:#c3c4c7;">Bot Statistics</div>
<div class="t" style="left:32.7px;top:1807.5px;font-size:12.68px;line-height:12.68px;font-weight:400;color:#f0f0f1;">Εμφάνιση</div>
<svg class="r" style="left:7.0px;top:1805.2px" width="18.0" height="18.0" viewBox="0 0 18 18"><path d="M9.5 1.2h7.3v3.3l-5 5-5.3-5.3z" fill="#a7aaad"/><path d="M9.2 2.5l5.8 5.8" stroke="#1d2327" stroke-width="0.7"/><path d="M7.2 6.5l3.6 3.6-6.6 6.2a1.6 1.6 0 0 1-2.4-2.4z" fill="#a7aaad"/></svg>
<div class="t" style="left:32.7px;top:1838.7px;font-size:12.68px;line-height:12.68px;font-weight:400;color:#f0f0f1;">YITH</div>
<svg class="r" style="left:7.0px;top:1836.4px" width="18.0" height="18.0" viewBox="0 0 18 18"><text x="1.5" y="14" font-size="20" font-weight="700" font-style="italic" font-family="Liberation Serif" fill="#a7aaad" stroke="#a7aaad" stroke-width="1">y</text></svg>
<div class="t" style="left:32.7px;top:1869.0px;font-size:12.68px;line-height:12.68px;font-weight:400;color:#f0f0f1;">Πρόσθετα</div>
<svg class="r" style="left:7.0px;top:1866.7px" width="18.0" height="18.0" viewBox="0 0 18 18"><path d="M10.8 1.5l1.4 1.4-2.3 2.3 1.4 1.4 2.3-2.3 1.4 1.4-2.3 2.3.9.9-4.8 4.8c-1.6 1.6-3.6 1.8-5 .8L1.8 16.4.6 15.2l2.1-2.1c-1-1.4-.8-3.4.8-5l4.8-4.8.9.9z" fill="#a7aaad"/></svg>
<div class="r" style="left:93.3px;top:1867.7px;width:20.0px;height:16.0px;background:#d63638;border-radius:8px"></div>
<div class="t" style="left:97.6px;top:1871.1px;font-size:9.5px;line-height:9.5px;font-weight:400;color:#fff;">28</div>
<div class="t" style="left:32.7px;top:1899.8px;font-size:12.68px;line-height:12.68px;font-weight:400;color:#f0f0f1;">Χρήστες</div>
<svg class="r" style="left:7.0px;top:1897.5px" width="18.0" height="18.0" viewBox="0 0 18 18"><circle cx="9" cy="5.5" r="3.5" fill="#a7aaad"/><path d="M2 16.5c0-4 3-6.5 7-6.5s7 2.5 7 6.5z" fill="#a7aaad"/></svg>
<div class="t" style="left:32.7px;top:1929.9px;font-size:12.68px;line-height:12.68px;font-weight:400;color:#f0f0f1;">Limit Login</div>
<div class="t" style="left:32.7px;top:1946.0px;font-size:12.68px;line-height:12.68px;font-weight:400;color:#f0f0f1;">Attempts</div>
<svg class="r" style="left:7.0px;top:1935.7px" width="18.0" height="18.0" viewBox="0 0 18 18"><path d="M5.2 16.2V10a3.8 3.8 0 0 1 7.6 0v1.5M2.3 13.8V10a6.7 6.7 0 0 1 13.4 0v3M1 7.5A8.5 8.5 0 0 1 16.5 5" fill="none" stroke="#a7aaad" stroke-width="1.3"/><path d="M9 9v7" stroke="#a7aaad" stroke-width="2.2"/><path d="M12.8 13.5v2.5" stroke="#a7aaad" stroke-width="1.3"/></svg>
<div class="t" style="left:32.7px;top:1978.0px;font-size:12.68px;line-height:12.68px;font-weight:400;color:#f0f0f1;">Εργαλεία</div>
<svg class="r" style="left:7.0px;top:1975.7px" width="18.0" height="18.0" viewBox="0 0 18 18"><path d="M16 4.5a4.5 4.5 0 0 1-5.8 4.3L4 15a1.8 1.8 0 0 1-2.6-2.6l6.2-6.2A4.5 4.5 0 0 1 12 1l-2.5 2.5.8 2.2 2.2.8z" fill="#a7aaad"/></svg>
<div class="t" style="left:32.7px;top:2008.8px;font-size:12.68px;line-height:12.68px;font-weight:400;color:#f0f0f1;">Ρυθμίσεις</div>
<svg class="r" style="left:7.0px;top:2006.5px" width="18.0" height="18.0" viewBox="0 0 18 18"><rect x="2" y="2" width="14" height="14" fill="#a7aaad"/><path d="M6 4v8M4 10l2 2 2-2M12 14V6M10 8l2-2 2 2" stroke="#1d2327" stroke-width="1.3" fill="none"/></svg>
<div class="t" style="left:32.7px;top:2038.8px;font-size:12.68px;line-height:12.68px;font-weight:400;color:#f0f0f1;">WP Mail SMTP</div>
<svg class="r" style="left:7.0px;top:2036.5px" width="18.0" height="18.0" viewBox="0 0 18 18"><rect x="1" y="2.5" width="13" height="10" rx="1" fill="#a7aaad"/><path d="M1.5 3.5l6 4.5 6-4.5" fill="none" stroke="#1d2327" stroke-width="1.3"/><path d="M10 13h5.5M13.5 10.5L16.5 13l-3 2.5" stroke="#a7aaad" stroke-width="1.8" fill="none"/></svg>
<div class="t" style="left:32.7px;top:2079.8px;font-size:12.68px;line-height:12.68px;font-weight:400;color:#f0f0f1;">Yoast SEO</div>
<svg class="r" style="left:7.0px;top:2077.5px" width="18.0" height="18.0" viewBox="0 0 18 18"><path d="M3.5 3.5h9.5a2 2 0 0 1 2 2v9a2 2 0 0 1-2 2H3.5a2 2 0 0 1-2-2v-9a2 2 0 0 1 2-2z" fill="#a7aaad"/><text x="3.2" y="13.5" font-size="12" font-family="Liberation Serif" fill="#1d2327">y</text><path d="M9.8 17.2L14.2 1.2" stroke="#1d2327" stroke-width="2"/><path d="M10.3 16.8L14.4 1.6" stroke="#a7aaad" stroke-width="0.9"/></svg>
<div class="r" style="left:98.8px;top:2078.5px;width:16.5px;height:16.0px;background:#d63638;border-radius:8px"></div>
<div class="t" style="left:104.1px;top:2081.9px;font-size:9.5px;line-height:9.5px;font-weight:400;color:#fff;">2</div>
<div class="t" style="left:32.7px;top:2110.6px;font-size:12.68px;line-height:12.68px;font-weight:400;color:#f0f0f1;">LayerSlider</div>
<svg class="r" style="left:7.0px;top:2108.3px" width="18.0" height="18.0" viewBox="0 0 18 18"><path d="M9 1.5l8 4-8 4-8-4z" fill="#a7aaad"/><path d="M1 8.5l8 4 8-4v2l-8 4-8-4zM1 12l8 4 8-4v2l-8 4-8-4z" fill="#a7aaad"/></svg>
<div class="t" style="left:32.7px;top:2140.8px;font-size:12.68px;line-height:12.68px;font-weight:400;color:#f0f0f1;">AdSense Scanner</div>
<svg class="r" style="left:7.0px;top:2138.5px" width="18.0" height="18.0" viewBox="0 0 18 18"><path d="M7.6 1.5h2.8l.4 2.2 1.5.7 1.9-1.3 2 2-1.3 1.9.7 1.5 2.2.4v2.8l-2.2.4-.7 1.5 1.3 1.9-2 2-1.9-1.3-1.5.7-.4 2.2H7.6l-.4-2.2-1.5-.7-1.9 1.3-2-2 1.3-1.9-.7-1.5-2.2-.4V7.6l2.2-.4.7-1.5L2 3.8l2-2 1.9 1.3 1.5-.7z" fill="#a7aaad" transform="translate(0.2 0) scale(0.95)"/><circle cx="8.75" cy="8.75" r="2.6" fill="#1d2327"/></svg>
<div class="t" style="left:32.7px;top:2172.1px;font-size:12.68px;line-height:12.68px;font-weight:400;color:#f0f0f1;">Wordfence</div>
<svg class="r" style="left:7.0px;top:2169.8px" width="18.0" height="18.0" viewBox="0 0 18 18"><path d="M1 6.5C4 3 7 2 9 1c2 1 5 2 8 5.5V15H1z" fill="#2271b1"/><path d="M1 6.8h16" stroke="#1d2327" stroke-width="0.9"/><path d="M4.2 7v8.5M7.4 7v8.5M10.6 7v8.5M13.8 7v8.5" stroke="#1d2327" stroke-width="1.2"/><path d="M1 11.5h16" stroke="#1d2327" stroke-width="0.6" stroke-dasharray="1.2 1"/></svg>
<div class="r" style="left:98.3px;top:2170.8px;width:16.5px;height:16.0px;background:#f0b429;border-radius:8px"></div>
<div class="t" style="left:103.6px;top:2174.2px;font-size:9.5px;line-height:9.5px;font-weight:400;color:#fff;">1</div>
<div class="t" style="left:32.7px;top:2202.9px;font-size:12.68px;line-height:12.68px;font-weight:400;color:#f0f0f1;">Maintenance</div>
<svg class="r" style="left:7.0px;top:2200.6px" width="18.0" height="18.0" viewBox="0 0 18 18"><path d="M2 2.5h3.6L9 8.5l3.4-6H16v10.5h-2.8V7.5L9.9 13H8.1L4.8 7.5V13H2z" fill="#a7aaad"/><circle cx="14.5" cy="15" r="2" fill="none" stroke="#a7aaad" stroke-width="1.5"/><path d="M2.5 13v3M4.2 13v3" stroke="#a7aaad" stroke-width="1.2"/></svg>
<div class="t" style="left:32.7px;top:2233.7px;font-size:12.68px;line-height:12.68px;font-weight:400;color:#f0f0f1;">Στατιστικά</div>
<svg class="r" style="left:7.0px;top:2231.4px" width="18.0" height="18.0" viewBox="0 0 18 18"><path d="M8 3a6.5 6.5 0 1 0 7 7H8z" fill="#a7aaad"/><path d="M9.5 1.5v7h7a7 7 0 0 0-7-7z" fill="#a7aaad"/></svg>
<div class="t" style="left:32.7px;top:2264.0px;font-size:12.68px;line-height:12.68px;font-weight:400;color:#f0f0f1;">Loco Translate</div>
<svg class="r" style="left:7.0px;top:2261.7px" width="18.0" height="18.0" viewBox="0 0 18 18"><rect x="1" y="1.5" width="9" height="8.5" rx="1.2" fill="#a7aaad"/><text x="3.2" y="8.5" font-size="7.5" font-style="italic" font-weight="700" font-family="Liberation Sans" fill="#1d2327">A</text><rect x="7.2" y="7" width="9.8" height="9.5" rx="1.2" fill="#a7aaad" stroke="#1d2327" stroke-width="1"/><path d="M12.1 8.6l.9 1.8 2 .3-1.5 1.3.4 2-1.8-1-1.8 1 .4-2-1.5-1.3 2-.3z" fill="none" stroke="#1d2327" stroke-width="0.9"/></svg>
<div class="t" style="left:32.7px;top:2294.6px;font-size:11.65px;line-height:11.65px;font-weight:400;color:#c3c4c7;">Σύμπτυξη μενού</div>
<svg class="r" style="left:7.0px;top:2291.8px" width="18.0" height="18.0" viewBox="0 0 18 18"><circle cx="9" cy="9" r="7.5" fill="#a7aaad"/><path d="M11 5v8L5.5 9z" fill="#1d2327"/></svg>
<div class="r" style="left:0.0px;top:2305.5px;width:144.0px;height:16.5px;background:#1d2327"></div>
<div class="r" style="left:291.5px;top:163.3px;width:1259.0px;height:446.3px;background:linear-gradient(135deg,#f4f5f8 0%,#eceff3 100%);border:1px solid #d3d7dd;border-radius:13px;box-shadow:0 2px 6px rgba(16,24,40,.06)"></div>
<svg class="r" style="left:322.8px;top:191.0px" width="21.0" height="21.0" viewBox="0 0 21 21"><g transform="scale(1.0)"><path d="M1 3.5L4 1h10.5l4.5 4.5V20H5.5L1 15.5z" fill="#000"/><path d="M2.3 4l2-1.8h9.5L17 5.5H6z" fill="#f3c9a5"/><path d="M2.3 4.3L6 6v12.5L2.3 15z" fill="#d9a77c"/><path d="M6 6h11.2v12.7H6z" fill="#bb8f65"/><path d="M10.5 2.2h2l2.7 3.3h-2z" fill="#c7c7c7"/><path d="M3 12l2 1v2.3l-2-1z" fill="#e81123"/></g></svg>
<div class="t" style="left:350.5px;top:193.8px;font-size:17.5px;line-height:17.5px;font-weight:700;color:#101828;">Optimized Products Score</div>
<div class="t" style="left:321.0px;top:220.7px;font-size:12.9px;line-height:12.9px;font-weight:400;color:#2c3338;-webkit-text-stroke:0.3px #2c3338;">Product optimization coverage in your catalog</div>
<div class="t" style="left:321.0px;top:242.3px;font-size:11.73px;line-height:11.73px;font-weight:400;color:#646970;">Based on products with non-empty AI-generated summaries</div>
<div class="t" style="left:321.0px;top:269.7px;font-size:45.5px;line-height:45.5px;font-weight:700;color:#e6423f;letter-spacing:0.6px;">0/100</div>
<div class="t" style="left:321.0px;top:307.3px;font-size:12.2px;line-height:12.2px;font-weight:400;color:#2c3338;-webkit-text-stroke:0.3px #2c3338;">Low</div>
<div class="t" style="left:321.0px;top:332.2px;font-size:11.83px;line-height:11.83px;font-weight:400;color:#646970;">0 of 9585 products optimized</div>
<div class="r" style="left:1412.3px;top:282.0px;width:109.0px;height:109.0px;background:#e6e7eb;border-radius:50%;box-shadow:0 4px 10px rgba(0,0,0,.06)"></div>
<div class="t" style="left:1444.6px;top:323.4px;font-size:31.4px;line-height:31.4px;font-weight:700;color:#fff;">0%</div>
<div class="r" style="left:321.5px;top:415.0px;width:1199.5px;height:1.0px;background:#d3d7dd"></div>
<svg class="r" style="left:321.9px;top:441.5px" width="12.0" height="16.0" viewBox="0 0 12 16"><path d="M6 1a5 5 0 0 0-3 9c.7.6 1 1.3 1 2h4c0-.7.3-1.4 1-2a5 5 0 0 0-3-9z" fill="#fdd77a" stroke="#000" stroke-width="1.2"/><rect x="3.8" y="12" width="4.4" height="3.3" rx="1" fill="#e5e7eb" stroke="#000" stroke-width="1"/></svg>
<div class="t" style="left:339.5px;top:442.7px;font-size:14.45px;line-height:14.45px;font-weight:700;color:#101828;">How to Improve Optimization Coverage</div>
<div class="r" style="left:321.7px;top:472.7px;width:388.6px;height:106.5px;background:#fff;border:1px solid #e5e7eb;border-radius:8px"></div>
<svg class="r" style="left:337.9px;top:482.2px" width="27.5" height="27.5" viewBox="-1.5 -1.5 27 27"><g transform="rotate(45 12 12)" stroke="#000" stroke-width="1.5" stroke-linejoin="round"><path d="M7.8 12.5L3.2 17.5v4.3l4.6-2.3zM16.2 12.5l4.6 5v4.3l-4.6-2.3z" fill="#00c3ff"/><path d="M12 -1.5C9 1 7.8 5 7.8 9v11.2h8.4V9c0-4-1.2-8-4.2-10.5z" fill="#fff"/><path d="M12 -1.5C10.3 0 9.2 2 8.6 4.2h6.8C14.8 2 13.7 0 12 -1.5z" fill="#e81123" stroke-width="0"/><path d="M8.6 20.2h6.8l-3.4 6.8z" fill="#f97316"/></g><g transform="rotate(45 12 12)"><circle cx="12" cy="9" r="1.9" fill="#c8c8c8"/><path d="M12 13v5" stroke="#5bc8f5" stroke-width="0.9"/><path d="M10.5 21.2h3l-1.5 3z" fill="#fcd34d"/></g></svg>
<div class="t" style="left:336.2px;top:514.1px;font-size:11.6px;line-height:11.6px;font-weight:700;color:#101828;">Generate AI Summaries</div>
<div class="t" style="left:336.2px;top:535.6px;font-size:10.98px;line-height:10.98px;font-weight:400;color:#646970;">Use product editor or bulk tools to fill AI summary metadata for more</div>
<div class="t" style="left:336.2px;top:551.6px;font-size:10.98px;line-height:10.98px;font-weight:400;color:#646970;">products.</div>
<div class="r" style="left:726.7px;top:472.7px;width:388.3px;height:106.5px;background:#fff;border:1px solid #e5e7eb;border-radius:8px"></div>
<svg class="r" style="left:742.2px;top:484.0px" width="25.0" height="25.0" viewBox="0 0 25 25"><g transform="scale(1.000)"><path d="M15.2 14.6l6.8 6.8" stroke="#000" stroke-width="5.2" stroke-linecap="round"/><path d="M15.6 15l6 6" stroke="#6b7a80" stroke-width="2.6" stroke-linecap="round"/><circle cx="10" cy="9.2" r="7.4" fill="#84bdea" stroke="#000" stroke-width="2"/><path d="M4.3 12.5L13.5 3.2A7 7 0 0 0 4.3 12.5z" fill="#b6dcf2"/></g></svg>
<div class="t" style="left:741.2px;top:514.1px;font-size:11.6px;line-height:11.6px;font-weight:700;color:#101828;">Configure Gemini API</div>
<div class="t" style="left:741.2px;top:535.6px;font-size:10.98px;line-height:10.98px;font-weight:400;color:#646970;">Add a valid API key in Settings so generation attempts can complete</div>
<div class="t" style="left:741.2px;top:551.6px;font-size:10.98px;line-height:10.98px;font-weight:400;color:#646970;">successfully.</div>
<div class="r" style="left:1131.9px;top:472.7px;width:388.0px;height:106.5px;background:#fff;border:1px solid #e5e7eb;border-radius:8px"></div>
<svg class="r" style="left:1148.4px;top:484.5px" width="23.5" height="23.5" viewBox="0 0 23.5 23.5"><g transform="scale(0.9038461538461539)"><rect x="1" y="1" width="24" height="24" fill="#f4f4f4" stroke="#000" stroke-width="2"/><path d="M9 2v22M17 2v22M2 9h22M2 17h22" stroke="#ddd" stroke-width="0.7"/><rect x="4.3" y="9" width="3.2" height="15" fill="#16c60c"/><rect x="11.5" y="13" width="3.2" height="11" fill="#f03a17"/><rect x="19" y="5" width="3.2" height="19" fill="#0078d7"/></g></svg>
<div class="t" style="left:1146.4px;top:514.1px;font-size:11.6px;line-height:11.6px;font-weight:700;color:#101828;">Improve Product Data</div>
<div class="t" style="left:1146.4px;top:535.6px;font-size:10.98px;line-height:10.98px;font-weight:400;color:#646970;">Complete product title, descriptions, image, price, and SKU for better</div>
<div class="t" style="left:1146.4px;top:551.6px;font-size:10.98px;line-height:10.98px;font-weight:400;color:#646970;">readiness and AI output quality.</div>
<div class="r" style="left:292.0px;top:639.2px;width:303.3px;height:111.0px;background:#fff;border:1px solid #e6e8eb;border-radius:11px;box-shadow:0 1px 4px rgba(16,24,40,.07)"></div>
<div class="t" style="left:314.0px;top:664.0px;font-size:12.86px;line-height:12.86px;font-weight:400;color:#50575e;-webkit-text-stroke:0.3px #50575e;">Total Bot Visits</div>
<div class="t" style="left:314.0px;top:683.1px;font-size:29.17px;line-height:29.17px;font-weight:700;color:#1c6ea4;">8812</div>
<div class="t" style="left:314.0px;top:714.8px;font-size:11.99px;line-height:11.99px;font-weight:400;color:#8c8f94;">All-time AI bot visits</div>
<div class="r" style="left:610.8px;top:639.2px;width:303.3px;height:111.0px;background:#fff;border:1px solid #e6e8eb;border-radius:11px;box-shadow:0 1px 4px rgba(16,24,40,.07)"></div>
<div class="t" style="left:632.8px;top:664.0px;font-size:12.86px;line-height:12.86px;font-weight:400;color:#50575e;-webkit-text-stroke:0.3px #50575e;">Unique AI Bots</div>
<div class="t" style="left:632.8px;top:683.1px;font-size:29.17px;line-height:29.17px;font-weight:700;color:#10b27a;">8</div>
<div class="t" style="left:632.8px;top:714.8px;font-size:11.99px;line-height:11.99px;font-weight:400;color:#8c8f94;">Different AI providers</div>
<div class="r" style="left:928.6px;top:639.2px;width:303.3px;height:111.0px;background:#fff;border:1px solid #e6e8eb;border-radius:11px;box-shadow:0 1px 4px rgba(16,24,40,.07)"></div>
<div class="t" style="left:950.6px;top:664.0px;font-size:12.86px;line-height:12.86px;font-weight:400;color:#50575e;-webkit-text-stroke:0.3px #50575e;">Products Optimized</div>
<div class="t" style="left:950.6px;top:683.1px;font-size:29.17px;line-height:29.17px;font-weight:700;color:#f29a0e;">4061</div>
<div class="t" style="left:950.6px;top:714.8px;font-size:11.99px;line-height:11.99px;font-weight:400;color:#8c8f94;">With AI summaries</div>
<div class="r" style="left:1247.6px;top:639.2px;width:303.3px;height:111.0px;background:#fff;border:1px solid #e6e8eb;border-radius:11px;box-shadow:0 1px 4px rgba(16,24,40,.07)"></div>
<div class="t" style="left:1269.6px;top:664.0px;font-size:12.86px;line-height:12.86px;font-weight:400;color:#50575e;-webkit-text-stroke:0.3px #50575e;">Last Activity</div>
<div class="t" style="left:1270.1px;top:690.9px;font-size:12.89px;line-height:12.89px;font-weight:700;color:#8b5cf6;">Μαρ 06, 20:04</div>
<div class="t" style="left:1269.6px;top:714.8px;font-size:11.99px;line-height:11.99px;font-weight:400;color:#8c8f94;">Most recent visit</div>
<div class="r" style="left:291.5px;top:780.3px;width:1259.0px;height:275.0px;background:#fff;border:1px solid #e3e6ea;border-radius:12px;box-shadow:0 1px 3px rgba(16,24,40,.08)"></div>
<div class="t" style="left:313.4px;top:803.7px;font-size:16.33px;line-height:16.33px;font-weight:700;color:#101828;">Overview - AI Bot Activity</div>
<div class="t" style="left:313.4px;top:827.1px;font-size:11.75px;line-height:11.75px;font-weight:400;color:#646970;">All AI bot mentions by type in the last 30 days</div>
<div class="r" style="left:314.3px;top:860.5px;width:163.2px;height:84.0px;background:#f9fafb;border:1px solid #e5e7eb;border-radius:8px"></div>
<div class="t" style="left:357.8px;top:879.0px;font-size:11.7px;line-height:11.7px;font-weight:700;color:#101828;">Googlebot</div>
<div class="t" style="left:327.5px;top:902.4px;font-size:21.6px;line-height:21.6px;font-weight:700;color:#101828;">5.513</div>
<div class="t" style="right:1216.0px;top:910.8px;font-size:11.21px;line-height:11.21px;font-weight:400;color:#646970;">62,6%</div>
<svg class="r" style="left:327.0px;top:874.0px" width="21.2" height="21.2" viewBox="0 0 21.2 21.2"><g transform="scale(0.964)"><path d="M21.6 11.2c0-.8-.1-1.5-.2-2.2H11v4.2h6a5 5 0 0 1-2.2 3.3v2.7h3.5c2-1.9 3.3-4.7 3.3-8z" fill="#4285f4"/><path d="M11 22c3 0 5.4-1 7.3-2.7l-3.5-2.7c-1 .7-2.3 1.1-3.8 1.1-2.9 0-5.4-2-6.3-4.6H1.1v2.8A11 11 0 0 0 11 22z" fill="#34a853"/><path d="M4.7 13.1a6.6 6.6 0 0 1 0-4.2V6.1H1.1a11 11 0 0 0 0 9.8z" fill="#fbbc05"/><path d="M11 4.4c1.6 0 3.1.6 4.3 1.7l3.2-3.2A11 11 0 0 0 1.1 6.1l3.6 2.8C5.6 6.3 8.1 4.4 11 4.4z" fill="#ea4335"/></g></svg>
<div class="r" style="left:489.3px;top:860.5px;width:163.2px;height:84.0px;background:#f9fafb;border:1px solid #e5e7eb;border-radius:8px"></div>
<div class="t" style="left:532.8px;top:875.9px;font-size:11.7px;line-height:11.7px;font-weight:700;color:#101828;">Meta External</div>
<div class="t" style="left:532.8px;top:890.0px;font-size:11.7px;line-height:11.7px;font-weight:700;color:#101828;">Agent</div>
<div class="t" style="left:502.5px;top:910.3px;font-size:21.6px;line-height:21.6px;font-weight:700;color:#101828;">1.840</div>
<div class="t" style="right:1041.0px;top:918.3px;font-size:11.21px;line-height:11.21px;font-weight:400;color:#646970;">20,9%</div>
<svg class="r" style="left:501.3px;top:880.0px" width="22.0" height="13.6" viewBox="0 0 22 13.64"><g transform="scale(0.917)"><path d="M6.5 3C3.5 3 1.5 6.5 1.5 10.5c0 2.6 1.2 4.5 3.3 4.5 2 0 3.4-1.6 5.6-5.3L12.8 6c1.6-2.2 2.9-3 4.6-3 2.9 0 4.9 3.3 4.9 7.3 0 2.7-1.3 4.7-3.4 4.7-1.8 0-2.9-1.1-4.9-4.4L11.3 6C9.6 3.8 8.3 3 6.5 3z" fill="none" stroke="#0b2a66" stroke-width="3.4" stroke-linejoin="round"/></g></svg>
<div class="r" style="left:664.3px;top:860.5px;width:163.2px;height:84.0px;background:#f9fafb;border:1px solid #e5e7eb;border-radius:8px"></div>
<div class="t" style="left:707.8px;top:879.0px;font-size:11.7px;line-height:11.7px;font-weight:700;color:#101828;">Bingbot</div>
<div class="t" style="left:677.5px;top:902.4px;font-size:21.6px;line-height:21.6px;font-weight:700;color:#101828;">909</div>
<div class="t" style="right:866.0px;top:910.8px;font-size:11.21px;line-height:11.21px;font-weight:400;color:#646970;">10,3%</div>
<svg class="r" style="left:676.8px;top:874.0px" width="21.0" height="21.0" viewBox="0 0 21 21"><g transform="scale(0.955)"><path d="M3 1l5 1.8v14.5l6.5-3.8-3.2-1.5-2-5 10.2 3.6v5.2L8 22 3 19z" fill="#111"/></g></svg>
<div class="r" style="left:839.3px;top:860.5px;width:163.2px;height:84.0px;background:#f9fafb;border:1px solid #e5e7eb;border-radius:8px"></div>
<div class="t" style="left:882.8px;top:875.9px;font-size:11.7px;line-height:11.7px;font-weight:700;color:#101828;">Facebook External</div>
<div class="t" style="left:882.8px;top:890.0px;font-size:11.7px;line-height:11.7px;font-weight:700;color:#101828;">Hit</div>
<div class="t" style="left:852.5px;top:910.3px;font-size:21.6px;line-height:21.6px;font-weight:700;color:#101828;">326</div>
<div class="t" style="right:691.0px;top:918.3px;font-size:11.21px;line-height:11.21px;font-weight:400;color:#646970;">3,7%</div>
<svg class="r" style="left:851.3px;top:880.0px" width="22.0" height="13.6" viewBox="0 0 22 13.64"><g transform="scale(0.917)"><path d="M6.5 3C3.5 3 1.5 6.5 1.5 10.5c0 2.6 1.2 4.5 3.3 4.5 2 0 3.4-1.6 5.6-5.3L12.8 6c1.6-2.2 2.9-3 4.6-3 2.9 0 4.9 3.3 4.9 7.3 0 2.7-1.3 4.7-3.4 4.7-1.8 0-2.9-1.1-4.9-4.4L11.3 6C9.6 3.8 8.3 3 6.5 3z" fill="none" stroke="#0b2a66" stroke-width="3.4" stroke-linejoin="round"/></g></svg>
<div class="r" style="left:1014.3px;top:860.5px;width:163.2px;height:84.0px;background:#f9fafb;border:1px solid #e5e7eb;border-radius:8px"></div>
<div class="t" style="left:1057.8px;top:879.0px;font-size:11.7px;line-height:11.7px;font-weight:700;color:#101828;">Applebot</div>
<div class="t" style="left:1027.5px;top:902.4px;font-size:21.6px;line-height:21.6px;font-weight:700;color:#101828;">190</div>
<div class="t" style="right:516.0px;top:910.8px;font-size:11.21px;line-height:11.21px;font-weight:400;color:#646970;">2,2%</div>
<svg class="r" style="left:1027.3px;top:874.0px" width="20.0" height="20.0" viewBox="0 0 20 20"><g transform="scale(0.909)"><path d="M15.5 11.7c0-2.6 2.1-3.8 2.2-3.9-1.2-1.8-3.1-2-3.7-2-1.6-.2-3.1.9-3.9.9-.8 0-2-.9-3.4-.9-1.7 0-3.3 1-4.2 2.6-1.8 3.1-.5 7.7 1.3 10.2.9 1.2 1.9 2.6 3.2 2.6 1.3-.1 1.8-.8 3.3-.8 1.6 0 2 .8 3.4.8 1.4 0 2.3-1.3 3.1-2.5 1-1.4 1.4-2.8 1.4-2.9 0 0-2.7-1-2.7-4.1zM13 4.1c.7-.9 1.2-2 1-3.2-1 0-2.3.7-3 1.6-.7.8-1.2 2-1.1 3.1 1.2.1 2.3-.6 3.1-1.5z" fill="#000"/></g></svg>
<div class="r" style="left:1189.3px;top:860.5px;width:163.2px;height:84.0px;background:#f9fafb;border:1px solid #e5e7eb;border-radius:8px"></div>
<div class="t" style="left:1232.8px;top:879.0px;font-size:11.7px;line-height:11.7px;font-weight:700;color:#101828;">Yandex Bot</div>
<div class="t" style="left:1202.5px;top:902.4px;font-size:21.6px;line-height:21.6px;font-weight:700;color:#101828;">31</div>
<div class="t" style="right:341.0px;top:910.8px;font-size:11.21px;line-height:11.21px;font-weight:400;color:#646970;">0,4%</div>
<svg class="r" style="left:1201.8px;top:874.0px" width="20.5" height="20.5" viewBox="0 0 20.5 20.5"><g transform="scale(0.932)"><rect width="22" height="22" rx="2" fill="#fc3f1d"/><path d="M12.3 18V4.5h-1.8c-3 0-4.6 1.6-4.6 3.9 0 2 .9 3 2.6 4.1L10 13.4 5.8 18" fill="none" stroke="#fff" stroke-width="0"/><path d="M7 4.5l4 7.5v6h1.8v-6l4-7.5h-2l-2.9 5.7-2.9-5.7z" fill="#fff"/></g></svg>
<div class="r" style="left:1364.3px;top:860.5px;width:163.2px;height:84.0px;background:#f9fafb;border:1px solid #e5e7eb;border-radius:8px"></div>
<div class="t" style="left:1407.8px;top:879.0px;font-size:11.7px;line-height:11.7px;font-weight:700;color:#101828;">DuckAssist Bot</div>
<div class="t" style="left:1377.5px;top:902.4px;font-size:21.6px;line-height:21.6px;font-weight:700;color:#101828;">2</div>
<div class="t" style="right:166.0px;top:910.8px;font-size:11.21px;line-height:11.21px;font-weight:400;color:#646970;">0,0%</div>
<svg class="r" style="left:1377.6px;top:874.0px" width="20.8" height="20.8" viewBox="0 0 20.8 20.8"><defs><linearGradient id="dg" x1="0" y1="0" x2="1" y2="1"><stop offset="0" stop-color="#de5a35"/><stop offset="1" stop-color="#b83a20"/></linearGradient></defs><g transform="scale(0.945)"><rect width="22" height="22" rx="2.8" fill="url(#dg)"/><circle cx="10.2" cy="6.5" r="2.6" fill="#fff"/><circle cx="11" cy="5.9" r="0.7" fill="#d24d2a"/><path d="M6.3 14.2c0-3 1.7-5 3.9-5s3.9 2 3.9 5-1.7 4.7-3.9 4.7-3.9-1.7-3.9-4.7z" fill="#fff"/></g></svg>
<div class="r" style="left:314.3px;top:956.0px;width:163.2px;height:77.3px;background:#f9fafb;border:1px solid #e5e7eb;border-radius:8px"></div>
<svg class="r" style="left:327.0px;top:969.0px" width="21.0" height="21.0" viewBox="0 0 21 21"><g transform="scale(0.955)" fill="none" stroke="#20b8cd" stroke-width="1.4"><path d="M3 6h16v8H3zM11 1v20M11 6L4 1v5M11 6l7-5v5M11 14l-7 6v-6M11 14l7 6v-6M4 14l7-8 7 8"/></g></svg>
<div class="t" style="left:357.8px;top:974.8px;font-size:11.7px;line-height:11.7px;font-weight:700;color:#101828;">Perplexity</div>
<div class="t" style="left:327.5px;top:999.2px;font-size:21.6px;line-height:21.6px;font-weight:700;color:#101828;">1</div>
<div class="t" style="right:1216.2px;top:1007.1px;font-size:11.21px;line-height:11.21px;font-weight:400;color:#646970;">0,0%</div>
<div class="r" style="left:291.7px;top:1085.6px;width:617.0px;height:309.0px;background:#fff;border:1px solid #e3e6ea;border-radius:12px;box-shadow:0 1px 3px rgba(16,24,40,.08)"></div>
<svg class="r" style="left:314.4px;top:1107.5px" width="18.5" height="18.5" viewBox="0 0 18.5 18.5"><g transform="scale(0.7115384615384616)"><rect x="1" y="1" width="24" height="24" fill="#f4f4f4" stroke="#000" stroke-width="2"/><path d="M9 2v22M17 2v22M2 9h22M2 17h22" stroke="#ddd" stroke-width="0.7"/><rect x="4.3" y="9" width="3.2" height="15" fill="#16c60c"/><rect x="11.5" y="13" width="3.2" height="11" fill="#f03a17"/><rect x="19" y="5" width="3.2" height="19" fill="#0078d7"/></g></svg>
<div class="t" style="left:339.4px;top:1110.2px;font-size:15.73px;line-height:15.73px;font-weight:700;color:#101828;">Bot Categories (7 Days)</div>
<div class="t" style="left:313.6px;top:1144.9px;font-size:12.27px;line-height:12.27px;font-weight:400;color:#1d2327;-webkit-text-stroke:0.25px #1d2327;">AI Agent</div>
<div class="t" style="right:792.5px;top:1145.0px;font-size:12.0px;line-height:12.0px;font-weight:700;color:#1c6ea4;">3</div>
<div class="r" style="left:313.6px;top:1164.4px;width:574.3px;height:7.0px;background:#e5e7eb;border-radius:4px"></div>
<div class="r" style="left:313.6px;top:1164.4px;width:2.9px;height:7.0px;background:#1c6ea4;border-radius:4px"></div>
<div class="t" style="left:313.6px;top:1188.1px;font-size:12.27px;line-height:12.27px;font-weight:400;color:#1d2327;-webkit-text-stroke:0.25px #1d2327;">Shopping AI</div>
<div class="t" style="right:792.5px;top:1188.2px;font-size:12.0px;line-height:12.0px;font-weight:700;color:#10b27a;">0</div>
<div class="r" style="left:313.6px;top:1207.6px;width:574.3px;height:7.0px;background:#e5e7eb;border-radius:4px"></div>
<div class="t" style="left:313.6px;top:1231.3px;font-size:12.27px;line-height:12.27px;font-weight:400;color:#1d2327;-webkit-text-stroke:0.25px #1d2327;">Search</div>
<div class="t" style="right:792.5px;top:1231.4px;font-size:12.0px;line-height:12.0px;font-weight:700;color:#f29a0e;">6643</div>
<div class="r" style="left:313.6px;top:1250.8px;width:574.3px;height:7.0px;background:#e5e7eb;border-radius:4px"></div>
<div class="r" style="left:313.6px;top:1250.8px;width:574.3px;height:7.0px;background:#f29a0e;border-radius:4px"></div>
<div class="t" style="left:313.6px;top:1274.5px;font-size:12.27px;line-height:12.27px;font-weight:400;color:#1d2327;-webkit-text-stroke:0.25px #1d2327;">Social</div>
<div class="t" style="right:792.5px;top:1274.6px;font-size:12.0px;line-height:12.0px;font-weight:700;color:#8b5cf6;">2166</div>
<div class="r" style="left:313.6px;top:1294.0px;width:574.3px;height:7.0px;background:#e5e7eb;border-radius:4px"></div>
<div class="r" style="left:313.6px;top:1294.0px;width:187.2px;height:7.0px;background:#8b5cf6;border-radius:4px"></div>
<div class="t" style="left:313.6px;top:1317.7px;font-size:12.27px;line-height:12.27px;font-weight:400;color:#1d2327;-webkit-text-stroke:0.25px #1d2327;">Scraper</div>
<div class="t" style="right:792.5px;top:1317.8px;font-size:12.0px;line-height:12.0px;font-weight:700;color:#e5484d;">0</div>
<div class="r" style="left:313.6px;top:1337.2px;width:574.3px;height:7.0px;background:#e5e7eb;border-radius:4px"></div>
<div class="r" style="left:932.9px;top:1085.6px;width:617.0px;height:309.0px;background:#fff;border:1px solid #e3e6ea;border-radius:12px;box-shadow:0 1px 3px rgba(16,24,40,.08)"></div>
<svg class="r" style="left:956.3px;top:1107.0px" width="13.9" height="18.8" viewBox="0 0 13.912 18.8"><g transform="scale(0.783)"><path d="M8.5 1.2C6.2 2.4 5.6 4.4 6 6.2 4.8 5.8 4.3 5 4.2 4.2 2.2 6 1 9 1 14c0 5.2 3.4 9 8.5 9s8.5-3.8 8.5-8.5c0-3.2-1.2-5.4-2.6-7-.2 1.5-.8 2.4-1.6 2.8C14 6 11.5 2.5 8.5 1.2z" fill="#f97316" stroke="#000" stroke-width="1.5" stroke-linejoin="round"/><path d="M9.3 13.5c-1.8 2-3.5 3.8-3.5 6 0 1.8 1.5 3 3.6 3s3.6-1.3 3.6-3c0-2.2-1.8-4-3.7-6z" fill="#fde047"/></g></svg>
<div class="t" style="left:976.7px;top:1110.2px;font-size:15.73px;line-height:15.73px;font-weight:700;color:#101828;">Trending Bots (7 Days)</div>
<div class="t" style="left:954.4px;top:1157.4px;font-size:15.8px;line-height:15.8px;font-weight:700;color:#c7cbd1;">#1</div>
<div class="t" style="left:982.5px;top:1158.6px;font-size:12.2px;line-height:12.2px;font-weight:400;color:#1d2327;-webkit-text-stroke:0.25px #1d2327;">Googlebot</div>
<div class="r" style="left:1457.4px;top:1153.3px;width:70.5px;height:22.7px;background:#eef5fb;border-radius:4px"></div>
<div class="t" style="right:158.5px;top:1159.1px;font-size:11.36px;line-height:11.36px;font-weight:700;color:#1c6ea4;">5513 visits</div>
<div class="r" style="left:953.6px;top:1186.8px;width:574.3px;height:1.0px;background:#e5e7eb"></div>
<div class="t" style="left:954.4px;top:1203.6px;font-size:15.8px;line-height:15.8px;font-weight:700;color:#c7cbd1;">#2</div>
<div class="t" style="left:982.5px;top:1204.8px;font-size:12.2px;line-height:12.2px;font-weight:400;color:#1d2327;-webkit-text-stroke:0.25px #1d2327;">Meta External Agent</div>
<div class="r" style="left:1457.4px;top:1199.5px;width:70.5px;height:22.7px;background:#eef5fb;border-radius:4px"></div>
<div class="t" style="right:158.5px;top:1205.3px;font-size:11.36px;line-height:11.36px;font-weight:700;color:#1c6ea4;">1840 visits</div>
<div class="r" style="left:953.6px;top:1233.0px;width:574.3px;height:1.0px;background:#e5e7eb"></div>
<div class="t" style="left:954.4px;top:1249.8px;font-size:15.8px;line-height:15.8px;font-weight:700;color:#c7cbd1;">#3</div>
<div class="t" style="left:982.5px;top:1251.0px;font-size:12.2px;line-height:12.2px;font-weight:400;color:#1d2327;-webkit-text-stroke:0.25px #1d2327;">Bingbot</div>
<div class="r" style="left:1463.7px;top:1245.7px;width:64.2px;height:22.7px;background:#eef5fb;border-radius:4px"></div>
<div class="t" style="right:158.5px;top:1251.5px;font-size:11.36px;line-height:11.36px;font-weight:700;color:#1c6ea4;">909 visits</div>
<div class="r" style="left:953.6px;top:1279.2px;width:574.3px;height:1.0px;background:#e5e7eb"></div>
<div class="t" style="left:954.4px;top:1296.0px;font-size:15.8px;line-height:15.8px;font-weight:700;color:#c7cbd1;">#4</div>
<div class="t" style="left:982.5px;top:1297.2px;font-size:12.2px;line-height:12.2px;font-weight:400;color:#1d2327;-webkit-text-stroke:0.25px #1d2327;">Facebook External Hit</div>
<div class="r" style="left:1463.7px;top:1291.9px;width:64.2px;height:22.7px;background:#eef5fb;border-radius:4px"></div>
<div class="t" style="right:158.5px;top:1297.7px;font-size:11.36px;line-height:11.36px;font-weight:700;color:#1c6ea4;">326 visits</div>
<div class="r" style="left:953.6px;top:1325.4px;width:574.3px;height:1.0px;background:#e5e7eb"></div>
<div class="t" style="left:954.4px;top:1342.2px;font-size:15.8px;line-height:15.8px;font-weight:700;color:#c7cbd1;">#5</div>
<div class="t" style="left:982.5px;top:1343.4px;font-size:12.2px;line-height:12.2px;font-weight:400;color:#1d2327;-webkit-text-stroke:0.25px #1d2327;">Applebot</div>
<div class="r" style="left:1463.7px;top:1338.1px;width:64.2px;height:22.7px;background:#eef5fb;border-radius:4px"></div>
<div class="t" style="right:158.5px;top:1343.9px;font-size:11.36px;line-height:11.36px;font-weight:700;color:#1c6ea4;">190 visits</div>
<div class="r" style="left:953.6px;top:1371.6px;width:574.3px;height:1.0px;background:#e5e7eb"></div>
<div class="r" style="left:291.7px;top:1424.9px;width:617.0px;height:420.2px;background:#fff;border:1px solid #e3e6ea;border-radius:12px;box-shadow:0 1px 3px rgba(16,24,40,.08)"></div>
<svg class="r" style="left:315.0px;top:1446.0px" width="19.5" height="19.5" viewBox="0 0 19.5 19.5"><g transform="scale(0.975) rotate(-45 10 10)"><rect x="0.8" y="5.2" width="18.4" height="9.6" rx="4.8" fill="#000"/><rect x="2.1" y="6.5" width="15.8" height="7" rx="3.5" fill="none" stroke="#b5b5b5" stroke-width="0.8"/><circle cx="10" cy="10" r="3.4" fill="#000" stroke="#b5b5b5" stroke-width="0.8"/><circle cx="10" cy="10" r="1.9" fill="#fff"/></g></svg>
<div class="t" style="left:340.6px;top:1448.1px;font-size:15.53px;line-height:15.53px;font-weight:700;color:#101828;">Most Accessed Endpoints</div>
<div class="r" style="left:313.6px;top:1481.2px;width:574.3px;height:268.9px;overflow:hidden;background:#fff">
<div class="r" style="left:0;top:0.0px;width:559.4px;height:54px;background:#f8f9fa;border-left:3px solid #1c6ea4;border-radius:6px 4px 4px 6px"></div>
<div class="r" style="left:11.4px;top:7.0px;width:292.8px;height:19px;background:#e9eaec;border-radius:2px"></div>
<div class="t" style="left:16.4px;top:12.7px;font-size:10.71px;line-height:10.71px;color:#50575e;font-family:'Liberation Mono',monospace">/product-category/-/alize/superwash-artisan/</div>
<div class="t" style="left:11.4px;top:33.3px;font-size:10.59px;line-height:10.59px;font-weight:700;color:#1c6ea4">67 visits</div>
<div class="r" style="left:0;top:61.4px;width:559.4px;height:54px;background:#f8f9fa;border-left:3px solid #1c6ea4;border-radius:6px 4px 4px 6px"></div>
<div class="r" style="left:11.4px;top:68.4px;width:106.4px;height:19px;background:#e9eaec;border-radius:2px"></div>
<div class="t" style="left:16.4px;top:74.1px;font-size:10.71px;line-height:10.71px;color:#50575e;font-family:'Liberation Mono',monospace">/product/-----/</div>
<div class="t" style="left:11.4px;top:94.7px;font-size:10.59px;line-height:10.59px;font-weight:700;color:#1c6ea4">44 visits</div>
<div class="r" style="left:0;top:122.8px;width:559.4px;height:54px;background:#f8f9fa;border-left:3px solid #1c6ea4;border-radius:6px 4px 4px 6px"></div>
<div class="r" style="left:11.4px;top:129.8px;width:106.4px;height:19px;background:#e9eaec;border-radius:2px"></div>
<div class="t" style="left:16.4px;top:135.5px;font-size:10.71px;line-height:10.71px;color:#50575e;font-family:'Liberation Mono',monospace">/product-tag/-/</div>
<div class="t" style="left:11.4px;top:156.1px;font-size:10.59px;line-height:10.59px;font-weight:700;color:#1c6ea4">36 visits</div>
<div class="r" style="left:0;top:184.2px;width:559.4px;height:54px;background:#f8f9fa;border-left:3px solid #1c6ea4;border-radius:6px 4px 4px 6px"></div>
<div class="r" style="left:11.4px;top:191.2px;width:100.0px;height:19px;background:#e9eaec;border-radius:2px"></div>
<div class="t" style="left:16.4px;top:196.9px;font-size:10.71px;line-height:10.71px;color:#50575e;font-family:'Liberation Mono',monospace">/product-tag//</div>
<div class="t" style="left:11.4px;top:217.5px;font-size:10.59px;line-height:10.59px;font-weight:700;color:#1c6ea4">36 visits</div>
<div class="r" style="left:0;top:245.6px;width:559.4px;height:54px;background:#f8f9fa;border-left:3px solid #1c6ea4;border-radius:6px 4px 4px 6px"></div>
<div class="r" style="left:11.4px;top:252.6px;width:100.0px;height:19px;background:#e9eaec;border-radius:2px"></div>
<div class="t" style="left:16.4px;top:258.3px;font-size:10.71px;line-height:10.71px;color:#50575e;font-family:'Liberation Mono',monospace">/product/----/</div>
<div class="r" style="left:560.6px;top:0;width:13.7px;height:268.9px;background:#f8f9fa"></div>
<div class="r" style="left:562.4px;top:17.8px;width:8.8px;height:126.8px;background:#8d9096;border-radius:5px"></div>
<svg class="r" style="left:562px;top:5px" width="9" height="6"><path d="M0 6L4.5 0 9 6z" fill="#5f6368"/></svg>
<svg class="r" style="left:562px;top:256px" width="9" height="6"><path d="M0 0L4.5 6 9 0z" fill="#5f6368"/></svg>
</div>
<div class="r" style="left:932.9px;top:1424.9px;width:617.0px;height:420.2px;background:#fff;border:1px solid #e3e6ea;border-radius:12px;box-shadow:0 1px 3px rgba(16,24,40,.08)"></div>
<svg class="r" style="left:956.0px;top:1446.0px" width="19.0" height="19.0" viewBox="0 0 19 19"><g transform="scale(0.864)"><path d="M11 1.5l2.9 6.2 6.8.8-5 4.6 1.3 6.7L11 16.5l-6 3.3 1.3-6.7-5-4.6 6.8-.8z" fill="#fcd34d" stroke="#000" stroke-width="1.5" stroke-linejoin="round"/></g></svg>
<div class="t" style="left:981.4px;top:1448.1px;font-size:15.53px;line-height:15.53px;font-weight:700;color:#101828;">Most Indexed Products</div>
<div class="r" style="left:953.6px;top:1481.2px;width:574.3px;height:59.8px;background:#f8f9fa;border-left:3px solid #10b27a;border-radius:6px"></div>
<div class="t" style="left:967.3px;top:1494.7px;font-size:12.24px;line-height:12.24px;font-weight:400;color:#1d2327;-webkit-text-stroke:0.3px #1d2327;">Φερμουάρ για μπουφάν και ζακέτες 65cm Καφέ 02</div>
<div class="t" style="left:967.3px;top:1517.1px;font-size:10.37px;line-height:10.37px;font-weight:400;color:#8c8f94;">ID: 50927</div>
<div class="t" style="right:162.7px;top:1495.2px;font-size:11.29px;line-height:11.29px;font-weight:700;color:#10b27a;">26 visits</div>
<div class="r" style="left:953.6px;top:1549.6px;width:574.3px;height:59.8px;background:#f8f9fa;border-left:3px solid #10b27a;border-radius:6px"></div>
<div class="t" style="left:967.3px;top:1563.1px;font-size:12.24px;line-height:12.24px;font-weight:400;color:#1d2327;-webkit-text-stroke:0.3px #1d2327;">Jeans Bamboo 138</div>
<div class="t" style="left:967.3px;top:1585.5px;font-size:10.37px;line-height:10.37px;font-weight:400;color:#8c8f94;">ID: 79840</div>
<div class="t" style="right:162.7px;top:1563.6px;font-size:11.29px;line-height:11.29px;font-weight:700;color:#10b27a;">24 visits</div>
<div class="r" style="left:953.6px;top:1618.0px;width:574.3px;height:59.8px;background:#f8f9fa;border-left:3px solid #10b27a;border-radius:6px"></div>
<div class="t" style="left:967.3px;top:1631.5px;font-size:12.24px;line-height:12.24px;font-weight:400;color:#1d2327;-webkit-text-stroke:0.3px #1d2327;">Σούστες Μεταλλικές Μαύρο 15mm (6 Τεμ.) Καρτα 54</div>
<div class="t" style="left:967.3px;top:1653.9px;font-size:10.37px;line-height:10.37px;font-weight:400;color:#8c8f94;">ID: 94388</div>
<div class="t" style="right:162.7px;top:1632.0px;font-size:11.29px;line-height:11.29px;font-weight:700;color:#10b27a;">17 visits</div>
<div class="r" style="left:953.6px;top:1686.4px;width:574.3px;height:59.8px;background:#f8f9fa;border-left:3px solid #10b27a;border-radius:6px"></div>
<div class="t" style="left:967.3px;top:1699.9px;font-size:12.24px;line-height:12.24px;font-weight:400;color:#1d2327;-webkit-text-stroke:0.3px #1d2327;">Σατέν Κορδέλα 3mm (1mt.) Μαύρο 13</div>
<div class="t" style="left:967.3px;top:1722.3px;font-size:10.37px;line-height:10.37px;font-weight:400;color:#8c8f94;">ID: 82958</div>
<div class="t" style="right:162.7px;top:1700.4px;font-size:11.29px;line-height:11.29px;font-weight:700;color:#10b27a;">16 visits</div>
<div class="r" style="left:953.6px;top:1754.8px;width:574.3px;height:59.8px;background:#f8f9fa;border-left:3px solid #10b27a;border-radius:6px"></div>
<div class="t" style="left:967.3px;top:1768.3px;font-size:12.24px;line-height:12.24px;font-weight:400;color:#1d2327;-webkit-text-stroke:0.3px #1d2327;">Σατέν Κορδέλα 3mm (1mt.) Ανοιχτό Ροζ 10</div>
<div class="t" style="left:967.3px;top:1790.7px;font-size:10.37px;line-height:10.37px;font-weight:400;color:#8c8f94;">ID: 82955</div>
<div class="t" style="right:162.7px;top:1768.8px;font-size:11.29px;line-height:11.29px;font-weight:700;color:#10b27a;">16 visits</div>
<div class="r" style="left:291.7px;top:1875.6px;width:1258.3px;height:222.1px;background:#fff;border:1px solid #e3e6ea;border-radius:12px;box-shadow:0 1px 3px rgba(16,24,40,.08)"></div>
<svg class="r" style="left:315.2px;top:1897.0px" width="19.0" height="19.0" viewBox="0 0 19 19"><g transform="scale(0.864)"><rect x="1" y="1" width="20" height="20" rx="1.5" fill="#16c60c" stroke="#000" stroke-width="1.6"/><path d="M5 11.5l4 4 8-9" fill="none" stroke="#fff" stroke-width="2"/></g></svg>
<div class="t" style="left:340.6px;top:1899.3px;font-size:15.5px;line-height:15.5px;font-weight:700;color:#101828;">System Status</div>
<div class="r" style="left:313.6px;top:1932.3px;width:599.7px;height:64.6px;background:#eafbf2;border-left:3px solid #10b27a;border-radius:6px"></div>
<svg class="r" style="left:332.1px;top:1949.1px" width="13.5" height="13.5" viewBox="0 0 13.5 13.5"><g transform="scale(0.614)"><rect x="1" y="1" width="20" height="20" rx="1.5" fill="#16c60c" stroke="#000" stroke-width="1.6"/><path d="M5 11.5l4 4 8-9" fill="none" stroke="#fff" stroke-width="2"/></g></svg>
<div class="t" style="left:350.4px;top:1949.7px;font-size:11.15px;line-height:11.15px;font-weight:700;color:#1d2327;">Bot Detection Active</div>
<div class="t" style="left:331.2px;top:1969.1px;font-size:10.97px;line-height:10.97px;font-weight:400;color:#646970;">Monitoring AI agent visits</div>
<div class="r" style="left:928.2px;top:1932.3px;width:599.7px;height:64.6px;background:#eafbf2;border-left:3px solid #10b27a;border-radius:6px"></div>
<svg class="r" style="left:946.7px;top:1949.1px" width="13.5" height="13.5" viewBox="0 0 13.5 13.5"><g transform="scale(0.614)"><rect x="1" y="1" width="20" height="20" rx="1.5" fill="#16c60c" stroke="#000" stroke-width="1.6"/><path d="M5 11.5l4 4 8-9" fill="none" stroke="#fff" stroke-width="2"/></g></svg>
<div class="t" style="left:965.0px;top:1949.7px;font-size:11.15px;line-height:11.15px;font-weight:700;color:#1d2327;">Manifest Endpoint</div>
<div class="t" style="left:945.8px;top:1969.1px;font-size:10.97px;line-height:10.97px;font-weight:400;color:#646970;">Available at /.well-known/</div>
<div class="r" style="left:313.6px;top:2012.5px;width:599.7px;height:64.6px;background:#eafbf2;border-left:3px solid #10b27a;border-radius:6px"></div>
<svg class="r" style="left:332.1px;top:2029.0px" width="15.4" height="14.0" viewBox="0 0 15.400000000000002 14"><g transform="scale(0.636)"><path d="M2.2 11.5C1 8.5 3 5.2 6.2 5c1.6-2.3 5.3-2.8 7.5-1.2 3.2-.2 6 2.4 5.8 5.6 1.6 2.2.6 5.6-2 6.4-.2 2.6-2.6 4.2-5 3.6-1.6 1-3.6.4-4.2-1C5.8 18.6 3 17.2 3 15c-1-.8-1.2-2.3-.8-3.5z" fill="#f9a8c0" stroke="#333" stroke-width="1.4"/><path d="M13 17.5c1.5.8 3.6.2 4.4-1.6" stroke="#e11d48" stroke-width="2.2" fill="none"/><path d="M8 8.5c1 .8 2.2.6 3-.4M12 11c1.2.5 2.4 0 3-1M7 13c1-.5 2-.3 2.6.6" stroke="#e46b8a" stroke-width="0.8" fill="none"/></g></svg>
<div class="t" style="left:350.4px;top:2029.9px;font-size:11.15px;line-height:11.15px;font-weight:700;color:#1d2327;">AI Visibility Score</div>
<div class="t" style="left:331.2px;top:2049.3px;font-size:10.97px;line-height:10.97px;font-weight:400;color:#646970;">Your score: 26/100</div>
<div class="r" style="left:928.2px;top:2012.5px;width:599.7px;height:64.6px;background:#eafbf2;border-left:3px solid #10b27a;border-radius:6px"></div>
<svg class="r" style="left:946.7px;top:2029.3px" width="13.5" height="13.5" viewBox="0 0 13.5 13.5"><g transform="scale(0.614)"><rect x="1" y="1" width="20" height="20" rx="1.5" fill="#16c60c" stroke="#000" stroke-width="1.6"/><path d="M5 11.5l4 4 8-9" fill="none" stroke="#fff" stroke-width="2"/></g></svg>
<div class="t" style="left:965.0px;top:2029.9px;font-size:11.15px;line-height:11.15px;font-weight:700;color:#1d2327;">Product Indexing</div>
<div class="t" style="left:945.8px;top:2049.3px;font-size:10.97px;line-height:10.97px;font-weight:400;color:#646970;">Products detected by AI</div>
<div class="r" style="left:291.7px;top:2128.8px;width:1258.3px;height:120.0px;background:#fff;border:1px solid #e3e6ea;border-radius:12px;box-shadow:0 1px 3px rgba(16,24,40,.08)"></div>
<div class="t" style="left:314.0px;top:2152.0px;font-size:16.29px;line-height:16.29px;font-weight:700;color:#101828;">Navigation</div>
<div class="r" style="left:314.0px;top:2181.5px;width:168.9px;height:45.8px;background:#2271b1;border-radius:3px"></div>
<svg class="r" style="left:330.0px;top:2198.5px" width="12.5" height="12.5" viewBox="0 0 12.5 12.5"><g transform="scale(0.4807692307692308)"><rect x="1" y="1" width="24" height="24" fill="#f4f4f4" stroke="#000" stroke-width="2"/><path d="M9 2v22M17 2v22M2 9h22M2 17h22" stroke="#ddd" stroke-width="0.7"/><rect x="4.3" y="9" width="3.2" height="15" fill="#16c60c"/><rect x="11.5" y="13" width="3.2" height="11" fill="#f03a17"/><rect x="19" y="5" width="3.2" height="19" fill="#0078d7"/></g></svg>
<div class="t" style="left:347.2px;top:2198.9px;font-size:11.67px;line-height:11.67px;font-weight:400;color:#fff;-webkit-text-stroke:0.2px #fff;">View Detailed Analytics</div>
<div class="r" style="left:493.0px;top:2181.5px;width:136.9px;height:45.8px;background:#f6f7f7;border:1px solid #2271b1;border-radius:3px"></div>
<svg class="r" style="left:508.7px;top:2197.5px" width="12.0" height="14.0" viewBox="0 0 12 14"><path d="M6 .8l5 2v4.5c0 3.2-2.2 5.6-5 6.5C3.2 12.9 1 10.5 1 7.3V2.8z" fill="#e81123" stroke="#000" stroke-width="1.2"/><path d="M6 1.5v11.8c-2.4-.9-4.3-3-4.3-6V3.3z" fill="#fff"/></svg>
<div class="t" style="left:525.0px;top:2199.0px;font-size:11.48px;line-height:11.48px;font-weight:400;color:#2271b1;">Bot Policy Builder</div>
<div class="r" style="left:641.2px;top:2181.5px;width:90.8px;height:45.8px;background:#f6f7f7;border:1px solid #2271b1;border-radius:3px"></div>
<svg class="r" style="left:656.5px;top:2198.0px" width="13.5" height="13.5" viewBox="0 0 13.5 13.5"><circle cx="6.75" cy="6.75" r="5" fill="none" stroke="#000" stroke-width="2.6" stroke-dasharray="1.6 1.1"/><circle cx="6.75" cy="6.75" r="4.2" fill="#d1d5db" stroke="#000" stroke-width="1"/><circle cx="6.75" cy="6.75" r="1.8" fill="#fff" stroke="#000" stroke-width="0.8"/></svg>
<div class="t" style="left:674.8px;top:2199.0px;font-size:11.5px;line-height:11.5px;font-weight:400;color:#2271b1;">Settings</div>
</body></html>
